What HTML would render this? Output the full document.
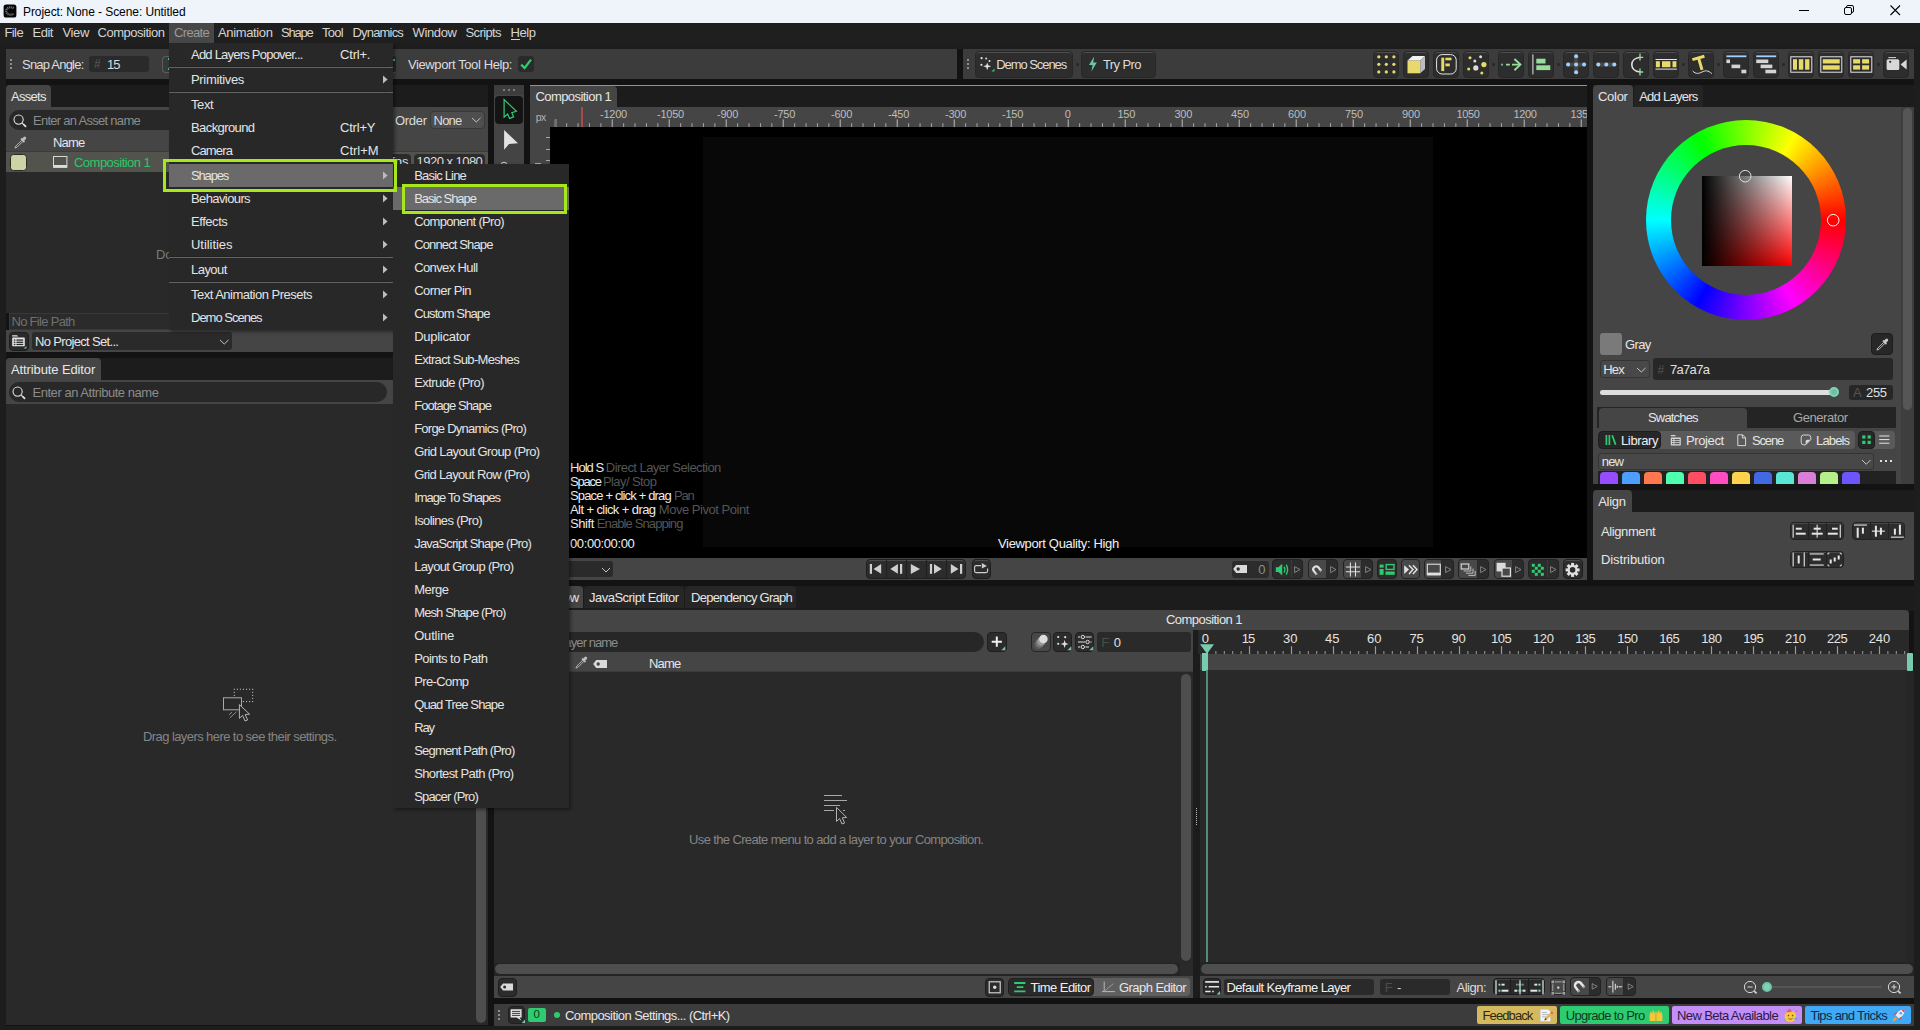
<!DOCTYPE html>
<html lang="en"><head><meta charset="utf-8"><title>Project: None - Scene: Untitled</title><style>
html,body{margin:0;padding:0;}
body{width:1920px;height:1030px;overflow:hidden;background:#1d1d1d;position:relative;font-family:"Liberation Sans",sans-serif;font-size:12.5px;}
#root{position:absolute;left:0;top:0;width:1920px;height:1030px;overflow:hidden;}
#root div,#root span.t,#root svg{position:absolute;box-sizing:border-box;}
span.t{white-space:pre;}
</style></head><body><div id="root">
<div style="left:0px;top:0px;width:1920px;height:23px;background:#eff3fa;"></div>
<svg style="left:3px;top:4px;" width="14" height="14" viewBox="0 0 14 14"><rect x="0.6" y="0.4" width="12.8" height="13.1" rx="2.6" fill="#050505"/><path d="M10.6 4.4 A4.3 3.7 0 1 0 10.6 9.6" fill="none" stroke="#6c6c6c" stroke-width="2.2" stroke-dasharray="1.2 0.6"/></svg>
<span class="t" style="left:23.00px;top:6.34px;font-size:12px;line-height:12px;letter-spacing:-0.072px;color:#000;">Project: None - Scene: Untitled</span>
<svg style="left:1794px;top:0px;" width="120" height="23" viewBox="0 0 120 23"><path d="M5 10.5 H15" stroke="#000" stroke-width="1"/><rect x="50.5" y="7.5" width="7" height="7" rx="1.5" fill="none" stroke="#000" stroke-width="1"/><path d="M52.5 7.5 V6.8 Q52.5 5.5 54 5.5 H58 Q59.5 5.5 59.5 7 V11 Q59.5 12.5 58 12.5 H57.5" fill="none" stroke="#000" stroke-width="1"/><path d="M96.5 5.5 L106 15 M106 5.5 L96.5 15" stroke="#000" stroke-width="1.1"/></svg>
<div style="left:0px;top:23px;width:1920px;height:20px;background:#1f1f1f;"></div>
<div style="left:169px;top:23px;width:45px;height:20px;background:#474747;"></div>
<span class="t" style="left:4.50px;top:26.40px;font-size:13px;line-height:13px;letter-spacing:-0.612px;color:#d4d4d4;">File</span>
<span class="t" style="left:32.50px;top:26.40px;font-size:13px;line-height:13px;letter-spacing:-0.475px;color:#d4d4d4;">Edit</span>
<span class="t" style="left:62.50px;top:26.40px;font-size:13px;line-height:13px;letter-spacing:-0.360px;color:#d4d4d4;">View</span>
<span class="t" style="left:97.50px;top:26.40px;font-size:13px;line-height:13px;letter-spacing:-0.477px;color:#d4d4d4;">Composition</span>
<span class="t" style="left:174.00px;top:26.40px;font-size:13px;line-height:13px;letter-spacing:-0.669px;color:#9a9a9a;">Create</span>
<span class="t" style="left:218.00px;top:26.40px;font-size:13px;line-height:13px;letter-spacing:-0.367px;color:#d4d4d4;">Animation</span>
<span class="t" style="left:281.00px;top:26.40px;font-size:13px;line-height:13px;letter-spacing:-1.200px;color:#d4d4d4;">Shape</span>
<span class="t" style="left:322.00px;top:26.40px;font-size:13px;line-height:13px;letter-spacing:-0.712px;color:#d4d4d4;">Tool</span>
<span class="t" style="left:352.50px;top:26.40px;font-size:13px;line-height:13px;letter-spacing:-0.820px;color:#d4d4d4;">Dynamics</span>
<span class="t" style="left:412.50px;top:26.40px;font-size:13px;line-height:13px;letter-spacing:-0.373px;color:#d4d4d4;">Window</span>
<span class="t" style="left:465.50px;top:26.40px;font-size:13px;line-height:13px;letter-spacing:-0.604px;color:#d4d4d4;">Scripts</span>
<span class="t" style="left:510.50px;top:26.40px;font-size:13px;line-height:13px;letter-spacing:-0.434px;color:#d4d4d4;">Help</span>
<div style="left:511px;top:39px;width:9px;height:1px;background:#d4d4d4;"></div>
<div style="left:6px;top:79px;width:1908px;height:946.5px;background:#131313;"></div>
<div style="left:6px;top:49px;width:951px;height:30px;background:#3c3c3c;"></div>
<div style="left:10px;top:59px;width:2px;height:2px;background:#8e8e8e;"></div>
<div style="left:10px;top:63px;width:2px;height:2px;background:#8e8e8e;"></div>
<div style="left:10px;top:67px;width:2px;height:2px;background:#8e8e8e;"></div>
<span class="t" style="left:22.00px;top:57.70px;font-size:13px;line-height:13px;letter-spacing:-0.783px;color:#dcdcdc;">Snap Angle:</span>
<div style="left:89px;top:56px;width:60px;height:16px;background:#2a2a2a;border-radius:3px;"></div>
<span class="t" style="left:94.00px;top:58.34px;font-size:12px;line-height:12px;letter-spacing:-0.200px;color:#5a5a5a;">#</span>
<span class="t" style="left:107.00px;top:57.60px;font-size:13px;line-height:13px;letter-spacing:-0.979px;color:#dcdcdc;">15</span>
<div style="left:161.5px;top:55.5px;width:234.5px;height:17px;background:#393939;border-radius:4px;border:1px solid #5e5e5e;border-right-color:#262626;"></div>
<div style="left:167.6px;top:58px;width:1.6px;height:1.6px;background:#2ecc71;"></div>
<div style="left:167.6px;top:68.4px;width:1.6px;height:1.6px;background:#2ecc71;"></div>
<div style="left:390px;top:56px;width:6px;height:16px;background:#262626;border-radius:0 3px 3px 0;"></div>
<div style="left:393.2px;top:59.4px;width:1.6px;height:1.6px;background:#2ecc71;"></div>
<span class="t" style="left:408.00px;top:57.70px;font-size:13px;line-height:13px;letter-spacing:-0.396px;color:#dcdcdc;">Viewport Tool Help:</span>
<div style="left:518px;top:56px;width:16px;height:16px;background:#2a2a2a;border-radius:3px;"></div>
<svg style="left:518px;top:56px;" width="16" height="16" viewBox="0 0 16 16"><path d="M3.2 8.6 L6.6 12 L13 3.6" fill="none" stroke="#2ecc71" stroke-width="2.2" stroke-linecap="butt" stroke-linejoin="miter"/></svg>
<div style="left:957px;top:49px;width:6px;height:30px;background:#131313;"></div>
<div style="left:963px;top:49px;width:951px;height:30px;background:#3c3c3c;"></div>
<div style="left:967px;top:59px;width:2px;height:2px;background:#8e8e8e;"></div>
<div style="left:967px;top:63px;width:2px;height:2px;background:#8e8e8e;"></div>
<div style="left:967px;top:67px;width:2px;height:2px;background:#8e8e8e;"></div>
<div style="left:974.5px;top:51px;width:98.5px;height:26.5px;background:#2d2d2d;border:1px solid #272727;border-radius:4px;box-shadow:inset 0 1px 0 #4e4e4e;"></div>
<div style="left:1081px;top:51px;width:74.5px;height:26.5px;background:#2d2d2d;border:1px solid #272727;border-radius:4px;box-shadow:inset 0 1px 0 #4e4e4e;"></div>
<div style="left:1076px;top:63px;width:2.6px;height:2.6px;background:#292929;border-radius:50%;"></div>
<svg style="left:979px;top:56px;" width="17" height="17" viewBox="0 0 17 17"><g fill="#e0e0e0"><circle cx="2.6" cy="2.2" r="1.1"/><circle cx="7.2" cy="2.6" r="1.0"/><circle cx="2.4" cy="8.8" r="1.1"/><circle cx="10.5" cy="5" r="1.0"/><path d="M8.2 6.4 L9.2 9.2 L12.2 10.2 L9.2 11.2 L8.2 14.2 L7.2 11.2 L4.2 10.2 L7.2 9.2 Z"/></g><path d="M15.5 12.5 V15.5 H12.5 Z" fill="#2ecc71"/></svg>
<span class="t" style="left:996.20px;top:57.70px;font-size:13px;line-height:13px;letter-spacing:-1.059px;color:#dcdcdc;">Demo Scenes</span>
<svg style="left:1088px;top:56px;" width="10" height="16" viewBox="0 0 10 16"><path d="M6.2 0.5 L1 9 H4.6 L3.4 15.5 L8.8 6.6 H5.2 Z" fill="#6fc5a7"/></svg>
<span class="t" style="left:1103.00px;top:57.70px;font-size:13px;line-height:13px;letter-spacing:-0.590px;color:#dcdcdc;">Try Pro</span>
<div style="left:1372.5px;top:51px;width:26.5px;height:26.5px;background:#2d2d2d;border:1px solid #272727;border-radius:4px;box-shadow:inset 0 1px 0 #4e4e4e;"></div>
<svg style="left:1372.5px;top:51px;" width="27" height="27" viewBox="0 0 27 27"><circle cx="5.8" cy="5.8" r="1.6" fill="#e8d96b"/><circle cx="5.8" cy="13.3" r="1.6" fill="#e8d96b"/><circle cx="5.8" cy="20.9" r="1.6" fill="#e8d96b"/><circle cx="13.3" cy="5.8" r="1.6" fill="#e8d96b"/><circle cx="13.3" cy="13.3" r="1.6" fill="#e8d96b"/><circle cx="13.3" cy="20.9" r="1.6" fill="#e8d96b"/><circle cx="20.9" cy="5.8" r="1.6" fill="#e8d96b"/><circle cx="20.9" cy="13.3" r="1.6" fill="#e8d96b"/><circle cx="20.9" cy="20.9" r="1.6" fill="#e8d96b"/></svg>
<div style="left:1402.5px;top:51px;width:26.5px;height:26.5px;background:#2d2d2d;border:1px solid #272727;border-radius:4px;box-shadow:inset 0 1px 0 #4e4e4e;"></div>
<svg style="left:1402.5px;top:51px;" width="27" height="27" viewBox="0 0 27 27"><rect x="4.5" y="9.5" width="12.7" height="12.8" fill="#e8d96b"/><path d="M4.5 9.5 L9.5 5 H22 L17.2 9.5 Z" fill="#f2f2f2"/><path d="M17.2 9.5 L22 5 V18 L17.2 22.3 Z" fill="#bdbdbd"/></svg>
<div style="left:1432.5px;top:51px;width:26.5px;height:26.5px;background:#2d2d2d;border:1px solid #272727;border-radius:4px;box-shadow:inset 0 1px 0 #4e4e4e;"></div>
<svg style="left:1432.5px;top:51px;" width="27" height="27" viewBox="0 0 27 27"><rect x="3.6" y="3.6" width="19.6" height="19.4" rx="5.5" fill="none" stroke="#e6e6e6" stroke-width="1"/><rect x="8.3" y="6.7" width="2.9" height="13.4" fill="#e8d96b"/><rect x="12.4" y="6.7" width="6.1" height="2.6" fill="#e8d96b"/><rect x="12.4" y="12.5" width="4.4" height="2.8" fill="#e8d96b"/></svg>
<div style="left:1462.5px;top:51px;width:26.5px;height:26.5px;background:#2d2d2d;border:1px solid #272727;border-radius:4px;box-shadow:inset 0 1px 0 #4e4e4e;"></div>
<svg style="left:1462.5px;top:51px;" width="27" height="27" viewBox="0 0 27 27"><circle cx="7" cy="6.7" r="1.5" fill="#e8d96b"/><circle cx="17.6" cy="5.8" r="1.5" fill="#dcdcdc"/><circle cx="11.8" cy="9.9" r="1.5" fill="#dcdcdc"/><circle cx="20.9" cy="13.6" r="2.6" fill="#e8d96b"/><circle cx="12.8" cy="16.9" r="2.6" fill="#dcdcdc"/><circle cx="5.7" cy="17.9" r="1.5" fill="#e8d96b"/><circle cx="18.8" cy="21.9" r="1.5" fill="#e8d96b"/></svg>
<div style="left:1497.5px;top:51px;width:26.5px;height:26.5px;background:#2d2d2d;border:1px solid #272727;border-radius:4px;box-shadow:inset 0 1px 0 #4e4e4e;"></div>
<svg style="left:1497.5px;top:51px;" width="27" height="27" viewBox="0 0 27 27"><g stroke="#97dd9c" stroke-width="1.8" fill="none"><path d="M3.2 13.6 H4.8 M8 13.6 H11.8 M14 13.6 H22"/><path d="M16.4 8 L22.4 13.6 L16.4 19.2" stroke-width="1.9"/></g></svg>
<div style="left:1527.5px;top:51px;width:26.5px;height:26.5px;background:#2d2d2d;border:1px solid #272727;border-radius:4px;box-shadow:inset 0 1px 0 #4e4e4e;"></div>
<svg style="left:1527.5px;top:51px;" width="27" height="27" viewBox="0 0 27 27"><rect x="4.4" y="3.4" width="1" height="20" fill="#e6e6e6"/><rect x="8.3" y="7.7" width="9.2" height="4.8" fill="#97dd9c"/><rect x="8.3" y="14.3" width="14" height="4.8" fill="#97dd9c"/></svg>
<div style="left:1562.5px;top:51px;width:26.5px;height:26.5px;background:#2d2d2d;border:1px solid #272727;border-radius:4px;box-shadow:inset 0 1px 0 #4e4e4e;"></div>
<svg style="left:1562.5px;top:51px;" width="27" height="27" viewBox="0 0 27 27"><path d="M13.1 5.3 V21.3 M5.1 13.6 H21.1" stroke="#484848" stroke-width="4.4" stroke-linecap="round"/><circle cx="13.1" cy="13.6" r="2" fill="#9fd0ff"/><circle cx="5.1" cy="13.6" r="2" fill="#9fd0ff"/><circle cx="21.1" cy="13.6" r="2" fill="#9fd0ff"/><circle cx="13.1" cy="5.3" r="2" fill="#9fd0ff"/><circle cx="13.1" cy="21.3" r="2" fill="#9fd0ff"/></svg>
<div style="left:1592.5px;top:51px;width:26.5px;height:26.5px;background:#2d2d2d;border:1px solid #272727;border-radius:4px;box-shadow:inset 0 1px 0 #4e4e4e;"></div>
<svg style="left:1592.5px;top:51px;" width="27" height="27" viewBox="0 0 27 27"><path d="M5.3 13.6 H21.3" stroke="#484848" stroke-width="4.4" stroke-linecap="round"/><circle cx="5.3" cy="13.6" r="2" fill="#9fd0ff"/><circle cx="13.3" cy="13.6" r="2" fill="#9fd0ff"/><circle cx="21.3" cy="13.6" r="2" fill="#9fd0ff"/></svg>
<div style="left:1622.5px;top:51px;width:26.5px;height:26.5px;background:#2d2d2d;border:1px solid #272727;border-radius:4px;box-shadow:inset 0 1px 0 #4e4e4e;"></div>
<svg style="left:1622.5px;top:51px;" width="27" height="27" viewBox="0 0 27 27"><path d="M17.2 6.3 C6 7.5 6 19.8 17.2 21" fill="none" stroke="#e0e0e0" stroke-width="1.6"/><path d="M17 2.6 V9.6 M17 6.3 H20.2 M17 17.6 V24.4 M17 21 H20.2" stroke="#97dd9c" stroke-width="1.3" fill="none"/></svg>
<div style="left:1652.5px;top:51px;width:26.5px;height:26.5px;background:#2d2d2d;border:1px solid #272727;border-radius:4px;box-shadow:inset 0 1px 0 #4e4e4e;"></div>
<svg style="left:1652.5px;top:51px;" width="27" height="27" viewBox="0 0 27 27"><rect x="2.5" y="8" width="21.4" height="1" fill="#e6e6e6"/><rect x="2.5" y="17.6" width="21.4" height="1" fill="#e6e6e6"/><rect x="2.9" y="10.2" width="4" height="6" fill="#e8d96b"/><rect x="9" y="10.2" width="8.4" height="6" fill="#e8d96b"/><rect x="19.5" y="10.2" width="3.9" height="6" fill="#e8d96b"/></svg>
<div style="left:1687.5px;top:51px;width:26.5px;height:26.5px;background:#2d2d2d;border:1px solid #272727;border-radius:4px;box-shadow:inset 0 1px 0 #4e4e4e;"></div>
<svg style="left:1687.5px;top:51px;" width="27" height="27" viewBox="0 0 27 27"><path d="M4.4 8.6 L16.4 5.2" stroke="#e8d96b" stroke-width="3" fill="none"/><path d="M10.6 7.2 L14 18.8" stroke="#e8d96b" stroke-width="3" fill="none"/><path d="M4.7 20 C8 23.5 11 22.5 14 21 S20 19 23.9 22.7" stroke="#e0e0e0" stroke-width="1" fill="none"/></svg>
<div style="left:1722.5px;top:51px;width:26.5px;height:26.5px;background:#2d2d2d;border:1px solid #272727;border-radius:4px;box-shadow:inset 0 1px 0 #4e4e4e;"></div>
<svg style="left:1722.5px;top:51px;" width="27" height="27" viewBox="0 0 27 27"><rect x="3.4" y="4.4" width="20" height="1.8" fill="#9fd0ff"/><rect x="3.4" y="8.5" width="3.6" height="3.6" fill="#d4d4d4"/><rect x="8.5" y="13.6" width="8.7" height="3.6" fill="#d4d4d4"/><rect x="18.4" y="18.7" width="4.9" height="3.6" fill="#d4d4d4"/></svg>
<div style="left:1752.5px;top:51px;width:26.5px;height:26.5px;background:#2d2d2d;border:1px solid #272727;border-radius:4px;box-shadow:inset 0 1px 0 #4e4e4e;"></div>
<svg style="left:1752.5px;top:51px;" width="27" height="27" viewBox="0 0 27 27"><rect x="3.2" y="4.4" width="20" height="1.8" fill="#9fd0ff"/><rect x="3.2" y="8.5" width="12.1" height="3.6" fill="#d4d4d4"/><rect x="7.6" y="13.6" width="11.7" height="3.6" fill="#d4d4d4"/><rect x="12.4" y="18.7" width="10.8" height="3.6" fill="#d4d4d4"/></svg>
<div style="left:1787.5px;top:51px;width:26.5px;height:26.5px;background:#2d2d2d;border:1px solid #272727;border-radius:4px;box-shadow:inset 0 1px 0 #4e4e4e;"></div>
<svg style="left:1787.5px;top:51px;" width="27" height="27" viewBox="0 0 27 27"><rect x="2.8" y="5.8" width="21" height="15.4" fill="none" stroke="#e6e6e6" stroke-width="1"/><rect x="5" y="8.2" width="4" height="10.5" fill="#e8d96b"/><rect x="10.8" y="8.2" width="4.5" height="10.5" fill="#e8d96b"/><rect x="17.1" y="8.2" width="4.299999999999997" height="10.5" fill="#e8d96b"/></svg>
<div style="left:1817.5px;top:51px;width:26.5px;height:26.5px;background:#2d2d2d;border:1px solid #272727;border-radius:4px;box-shadow:inset 0 1px 0 #4e4e4e;"></div>
<svg style="left:1817.5px;top:51px;" width="27" height="27" viewBox="0 0 27 27"><rect x="2.8" y="5.8" width="21" height="15.4" fill="none" stroke="#e6e6e6" stroke-width="1"/><rect x="4.8" y="8.2" width="16.9" height="4.3" fill="#e8d96b"/><rect x="4.8" y="14.3" width="16.9" height="4.4" fill="#e8d96b"/></svg>
<div style="left:1847.5px;top:51px;width:26.5px;height:26.5px;background:#2d2d2d;border:1px solid #272727;border-radius:4px;box-shadow:inset 0 1px 0 #4e4e4e;"></div>
<svg style="left:1847.5px;top:51px;" width="27" height="27" viewBox="0 0 27 27"><rect x="2.8" y="5.8" width="21" height="15.4" fill="none" stroke="#e6e6e6" stroke-width="1"/><rect x="5.1" y="8.2" width="7" height="4.3" fill="#e8d96b"/><rect x="5.1" y="14.3" width="7" height="4.3" fill="#e8d96b"/><rect x="14.1" y="8.2" width="7" height="4.3" fill="#e8d96b"/><rect x="14.1" y="14.3" width="7" height="4.3" fill="#e8d96b"/></svg>
<div style="left:1882.5px;top:51px;width:26.5px;height:26.5px;background:#2d2d2d;border:1px solid #272727;border-radius:4px;box-shadow:inset 0 1px 0 #4e4e4e;"></div>
<svg style="left:1882.5px;top:51px;" width="27" height="27" viewBox="0 0 27 27"><rect x="3.6" y="8.2" width="12.7" height="10.8" rx="1.5" fill="#d8d8d8"/><path d="M17.6 13.6 L23.6 8.4 V18.6 Z" fill="#d8d8d8"/><rect x="5.4" y="6.1" width="7.6" height="1" fill="#d8d8d8"/><circle cx="7.2" cy="10.8" r="1.1" fill="#2d2d2d"/></svg>
<div style="left:1492.3px;top:63px;width:2.6px;height:2.6px;background:#292929;border-radius:50%;"></div>
<div style="left:1557.3px;top:63px;width:2.6px;height:2.6px;background:#292929;border-radius:50%;"></div>
<div style="left:1682.3px;top:63px;width:2.6px;height:2.6px;background:#292929;border-radius:50%;"></div>
<div style="left:1717.3px;top:63px;width:2.6px;height:2.6px;background:#292929;border-radius:50%;"></div>
<div style="left:1782.3px;top:63px;width:2.6px;height:2.6px;background:#292929;border-radius:50%;"></div>
<div style="left:1877.3px;top:63px;width:2.6px;height:2.6px;background:#292929;border-radius:50%;"></div>
<div style="left:6px;top:85px;width:482px;height:22px;background:#1c1c1c;"></div>
<div style="left:6px;top:85px;width:45px;height:22px;background:#454545;border-radius:4px 4px 0 0;"></div>
<span class="t" style="left:11.00px;top:89.80px;font-size:13px;line-height:13px;letter-spacing:-0.702px;color:#e6e6e6;">Assets</span>
<div style="left:6px;top:107px;width:482px;height:46px;background:#454545;"></div>
<div style="left:9px;top:110px;width:382px;height:20px;background:#282828;border-radius:10px;"></div>
<svg style="left:13px;top:113.5px;" width="14" height="14" viewBox="0 0 14 14"><circle cx="5.6" cy="5.6" r="4.6" fill="none" stroke="#e0e0e0" stroke-width="1.1"/><path d="M9 9 L12.4 12.2" stroke="#e0e0e0" stroke-width="1.1"/><path d="M11 10.8 L12.6 12.3" stroke="#e0e0e0" stroke-width="1.7" stroke-linecap="round"/></svg>
<span class="t" style="left:33.00px;top:113.80px;font-size:13px;line-height:13px;letter-spacing:-0.720px;color:#8c8c8c;">Enter an Asset name</span>
<span class="t" style="left:395.00px;top:113.80px;font-size:13px;line-height:13px;letter-spacing:-0.305px;color:#dcdcdc;">Order</span>
<div style="left:430.3px;top:111px;width:54.4px;height:17.5px;background:#4e4e4e;border:1px solid #383838;border-radius:4px;"></div>
<span class="t" style="left:433.60px;top:113.80px;font-size:13px;line-height:13px;letter-spacing:-0.844px;color:#dcdcdc;">None</span>
<svg style="left:470.5px;top:117px;" width="10.5" height="6.5" viewBox="0 0 10.5 6.5"><path d="M1 1 L5.25 5.0 L9.5 1" fill="none" stroke="#c4c4c4" stroke-width="1"/></svg>
<div style="left:6px;top:151px;width:482px;height:1px;background:#3b3b3b;"></div>
<svg style="left:14px;top:136px;" width="13" height="13" viewBox="0 0 13 13"><path d="M0.9 12.1 L1.9 10 L7.4 4.5 L8.6 5.7 L3.1 11.2 Z" fill="none" stroke="#bdbdbd" stroke-width="0.9"/><path d="M6.4 3.2 L9.9 6.7 L11 5.6 L10.2 4.8 L11.9 3.1 Q12.7 1.8 11.7 0.9 Q10.8 0.1 9.7 0.9 L8.1 2.6 L7.4 1.9 Z" fill="#bdbdbd"/></svg>
<span class="t" style="left:53.00px;top:136.40px;font-size:13px;line-height:13px;letter-spacing:-0.794px;color:#e6e6e6;">Name</span>
<div style="left:6px;top:152px;width:482px;height:20px;background:#52534c;"></div>
<div style="left:9.5px;top:153.5px;width:17px;height:17px;background:#cdd3a3;border:1px solid #2a2a26;border-radius:3.5px;"></div>
<svg style="left:53px;top:156px;" width="15" height="12" viewBox="0 0 15 12"><rect x="0.5" y="0.5" width="13.4" height="10.8" fill="none" stroke="#d6d6d6" stroke-width="1"/><rect x="0.5" y="9" width="13.4" height="2.6" fill="#dcdcdc"/></svg>
<span class="t" style="left:74.00px;top:155.90px;font-size:13px;line-height:13px;letter-spacing:-0.522px;color:#2bc86b;">Composition 1</span>
<div style="left:384px;top:154px;width:26.5px;height:17px;background:#2b2b2b;border-radius:4px;"></div>
<span class="t" style="left:391.20px;top:155.40px;font-size:13px;line-height:13px;letter-spacing:0.020px;color:#dcdcdc;">fps</span>
<div style="left:414px;top:154px;width:71px;height:17px;background:#2b2b2b;border-radius:4px;"></div>
<span class="t" style="left:416.60px;top:155.40px;font-size:13px;line-height:13px;letter-spacing:-0.532px;color:#dcdcdc;">1920 x 1080</span>
<div style="left:6px;top:172px;width:482px;height:141px;background:#292929;"></div>
<span class="t" style="left:156.00px;top:248.30px;font-size:13px;line-height:13px;letter-spacing:-0.200px;color:#7a7a7a;">Double-click to import Assets</span>
<div style="left:8.5px;top:312.5px;width:479px;height:17px;background:#2b2b2b;border:1px solid #383838;"></div>
<span class="t" style="left:11.50px;top:314.70px;font-size:13px;line-height:13px;letter-spacing:-0.702px;color:#707070;">No File Path</span>
<div style="left:6px;top:329.5px;width:482px;height:22.5px;background:#454545;"></div>
<div style="left:9px;top:331.5px;width:19.5px;height:19px;background:#2a2a2a;border:1px solid #1e1e1e;border-radius:4px;"></div>
<svg style="left:11px;top:333px;" width="16" height="16" viewBox="0 0 16 16"><path d="M1.2 3.2 V2.2 H6 L7.2 3.4 H1.2" fill="#e6e6e6"/><rect x="1.2" y="4.6" width="12.6" height="8.6" rx="0.8" fill="#e6e6e6"/><g fill="#2a2a2a"><rect x="2.8" y="6.4" width="1.6" height="1.3"/><rect x="5.4" y="6.4" width="6.8" height="1.3"/><rect x="2.8" y="8.6" width="1.6" height="1.3"/><rect x="5.4" y="8.6" width="6.8" height="1.3"/><rect x="2.8" y="10.8" width="1.6" height="1.3"/><rect x="5.4" y="10.8" width="6.8" height="1.3"/></g><path d="M15.4 13 V15.6 H12.8 Z" fill="#6fc5a7"/></svg>
<div style="left:32px;top:332px;width:200px;height:18px;background:#2a2a2a;border-radius:3px;"></div>
<span class="t" style="left:35.00px;top:334.70px;font-size:13px;line-height:13px;letter-spacing:-0.667px;color:#e6e6e6;">No Project Set...</span>
<svg style="left:218.5px;top:338.5px;" width="10.5" height="6.5" viewBox="0 0 10.5 6.5"><path d="M1 1 L5.25 5.0 L9.5 1" fill="none" stroke="#c4c4c4" stroke-width="1"/></svg>
<div style="left:6px;top:358px;width:482px;height:22px;background:#1c1c1c;"></div>
<div style="left:6px;top:358px;width:95px;height:22px;background:#454545;border-radius:4px 4px 0 0;"></div>
<span class="t" style="left:11.00px;top:363.00px;font-size:13px;line-height:13px;letter-spacing:-0.111px;color:#e6e6e6;">Attribute Editor</span>
<div style="left:6px;top:380px;width:482px;height:24px;background:#454545;"></div>
<div style="left:8.5px;top:382px;width:378px;height:19.5px;background:#282828;border-radius:10px;"></div>
<svg style="left:12px;top:385.5px;" width="14" height="14" viewBox="0 0 14 14"><circle cx="5.6" cy="5.6" r="4.6" fill="none" stroke="#e0e0e0" stroke-width="1.1"/><path d="M9 9 L12.4 12.2" stroke="#e0e0e0" stroke-width="1.1"/><path d="M11 10.8 L12.6 12.3" stroke="#e0e0e0" stroke-width="1.7" stroke-linecap="round"/></svg>
<span class="t" style="left:32.50px;top:386.10px;font-size:13px;line-height:13px;letter-spacing:-0.464px;color:#8c8c8c;">Enter an Attribute name</span>
<div style="left:6px;top:404px;width:482px;height:621px;background:#292929;"></div>
<div style="left:476px;top:406px;width:10px;height:616.5px;background:#4e4e4e;border-radius:5px;"></div>
<svg style="left:220px;top:686px;" width="38" height="38" viewBox="0 0 38 38"><rect x="13.75" y="2.75" width="1.1" height="1.1" fill="#b8b8b8"/><rect x="16.81" y="2.75" width="1.1" height="1.1" fill="#b8b8b8"/><rect x="19.87" y="2.75" width="1.1" height="1.1" fill="#b8b8b8"/><rect x="22.93" y="2.75" width="1.1" height="1.1" fill="#b8b8b8"/><rect x="25.99" y="2.75" width="1.1" height="1.1" fill="#b8b8b8"/><rect x="29.05" y="2.75" width="1.1" height="1.1" fill="#b8b8b8"/><rect x="32.11" y="2.75" width="1.1" height="1.1" fill="#b8b8b8"/><rect x="32.11" y="5.81" width="1.1" height="1.1" fill="#b8b8b8"/><rect x="32.11" y="8.87" width="1.1" height="1.1" fill="#b8b8b8"/><rect x="32.11" y="11.93" width="1.1" height="1.1" fill="#b8b8b8"/><rect x="32.11" y="14.99" width="1.1" height="1.1" fill="#b8b8b8"/><rect x="13.75" y="5.81" width="1.1" height="1.1" fill="#b8b8b8"/><rect x="13.75" y="8.87" width="1.1" height="1.1" fill="#b8b8b8"/><rect x="22.93" y="14.99" width="1.1" height="1.1" fill="#b8b8b8"/><rect x="25.99" y="14.99" width="1.1" height="1.1" fill="#b8b8b8"/><rect x="29.05" y="14.99" width="1.1" height="1.1" fill="#b8b8b8"/><g fill="none" stroke="#a8a8a8" stroke-width="1"><rect x="3.5" y="11.8" width="18" height="12"/><path d="M9 29 L12 26 M9.8 32 L16.4 25.8" stroke="#8c8c8c"/></g><path d="M19.4 18.6 V32.4 L22.6 29.4 L25 35 L27.6 34 L25.2 28.6 L29.6 28.2 Z" fill="#292929" stroke="#b4b4b4" stroke-width="1"/></svg>
<span class="t" style="left:143.00px;top:729.60px;font-size:13px;line-height:13px;letter-spacing:-0.580px;color:#858585;">Drag layers here to see their settings.</span>
<div style="left:494px;top:85px;width:30px;height:495px;background:#444;"></div>
<div style="left:494px;top:85px;width:30px;height:10px;background:#3d3d3d;"></div>
<div style="left:503px;top:89.2px;width:1.8px;height:1.8px;background:#7c7c7c;"></div>
<div style="left:508.2px;top:89.2px;width:1.8px;height:1.8px;background:#7c7c7c;"></div>
<div style="left:513.3px;top:89.2px;width:1.8px;height:1.8px;background:#7c7c7c;"></div>
<div style="left:495px;top:96px;width:28px;height:28px;background:#141414;border-radius:4px;"></div>
<svg style="left:495px;top:96px;" width="28" height="28" viewBox="0 0 28 28"><path d="M9.1 3.6 V21.2 L12.6 18 L14.6 22.4 L18.6 20.8 L16.8 16.6 L21.4 15.2 Z" fill="none" stroke="#2ecc71" stroke-width="1.2" stroke-linejoin="miter"/></svg>
<svg style="left:495px;top:126px;" width="28" height="28" viewBox="0 0 28 28"><path d="M9.1 4.1 V23.7 L14 18 L23 17.3 Z" fill="#e2e2e2"/></svg>
<svg style="left:495px;top:156px;" width="28" height="10" viewBox="0 0 28 10"><path d="M6 7.4 L9 6.2 L12 7.4" fill="none" stroke="#d0d0d0" stroke-width="1"/></svg>
<div style="left:530px;top:85px;width:1057px;height:22px;background:#1c1c1c;"></div>
<div style="left:530px;top:85px;width:1057px;height:1px;background:#2ecc71;"></div>
<div style="left:530px;top:86px;width:87px;height:21px;background:#454545;border-radius:0 4px 0 0;"></div>
<span class="t" style="left:535.40px;top:89.80px;font-size:13px;line-height:13px;letter-spacing:-0.553px;color:#e6e6e6;">Composition 1</span>
<div style="left:530px;top:107px;width:1057px;height:20px;background:#454545;"></div>
<div style="left:530px;top:127px;width:20px;height:430px;background:#454545;"></div>
<span class="t" style="left:535.70px;top:112.31px;font-size:10.5px;line-height:10.5px;letter-spacing:-0.594px;color:#b4b4b4;">px</span>
<svg style="left:530px;top:107px;" width="1057" height="20" viewBox="0 0 1057 20"><rect x="24.65" y="12.4" width="1.2" height="7.6" fill="#a8a8a8"/><rect x="36.15" y="16.2" width="1" height="3.8" fill="#a8a8a8"/><rect x="47.55" y="16.2" width="1" height="3.8" fill="#a8a8a8"/><rect x="58.95" y="16.2" width="1" height="3.8" fill="#a8a8a8"/><rect x="70.35" y="16.2" width="1" height="3.8" fill="#a8a8a8"/><rect x="81.65" y="12.4" width="1.2" height="7.6" fill="#a8a8a8"/><rect x="93.15" y="16.2" width="1" height="3.8" fill="#a8a8a8"/><rect x="104.55" y="16.2" width="1" height="3.8" fill="#a8a8a8"/><rect x="115.95" y="16.2" width="1" height="3.8" fill="#a8a8a8"/><rect x="127.35" y="16.2" width="1" height="3.8" fill="#a8a8a8"/><rect x="138.65" y="12.4" width="1.2" height="7.6" fill="#a8a8a8"/><rect x="150.15" y="16.2" width="1" height="3.8" fill="#a8a8a8"/><rect x="161.55" y="16.2" width="1" height="3.8" fill="#a8a8a8"/><rect x="172.95" y="16.2" width="1" height="3.8" fill="#a8a8a8"/><rect x="184.35" y="16.2" width="1" height="3.8" fill="#a8a8a8"/><rect x="195.65" y="12.4" width="1.2" height="7.6" fill="#a8a8a8"/><rect x="207.15" y="16.2" width="1" height="3.8" fill="#a8a8a8"/><rect x="218.55" y="16.2" width="1" height="3.8" fill="#a8a8a8"/><rect x="229.95" y="16.2" width="1" height="3.8" fill="#a8a8a8"/><rect x="241.35" y="16.2" width="1" height="3.8" fill="#a8a8a8"/><rect x="252.65" y="12.4" width="1.2" height="7.6" fill="#a8a8a8"/><rect x="264.15" y="16.2" width="1" height="3.8" fill="#a8a8a8"/><rect x="275.55" y="16.2" width="1" height="3.8" fill="#a8a8a8"/><rect x="286.95" y="16.2" width="1" height="3.8" fill="#a8a8a8"/><rect x="298.35" y="16.2" width="1" height="3.8" fill="#a8a8a8"/><rect x="309.65" y="12.4" width="1.2" height="7.6" fill="#a8a8a8"/><rect x="321.15" y="16.2" width="1" height="3.8" fill="#a8a8a8"/><rect x="332.55" y="16.2" width="1" height="3.8" fill="#a8a8a8"/><rect x="343.95" y="16.2" width="1" height="3.8" fill="#a8a8a8"/><rect x="355.35" y="16.2" width="1" height="3.8" fill="#a8a8a8"/><rect x="366.65" y="12.4" width="1.2" height="7.6" fill="#a8a8a8"/><rect x="378.15" y="16.2" width="1" height="3.8" fill="#a8a8a8"/><rect x="389.55" y="16.2" width="1" height="3.8" fill="#a8a8a8"/><rect x="400.95" y="16.2" width="1" height="3.8" fill="#a8a8a8"/><rect x="412.35" y="16.2" width="1" height="3.8" fill="#a8a8a8"/><rect x="423.65" y="12.4" width="1.2" height="7.6" fill="#a8a8a8"/><rect x="435.15" y="16.2" width="1" height="3.8" fill="#a8a8a8"/><rect x="446.55" y="16.2" width="1" height="3.8" fill="#a8a8a8"/><rect x="457.95" y="16.2" width="1" height="3.8" fill="#a8a8a8"/><rect x="469.35" y="16.2" width="1" height="3.8" fill="#a8a8a8"/><rect x="480.65" y="12.4" width="1.2" height="7.6" fill="#a8a8a8"/><rect x="492.15" y="16.2" width="1" height="3.8" fill="#a8a8a8"/><rect x="503.55" y="16.2" width="1" height="3.8" fill="#a8a8a8"/><rect x="514.95" y="16.2" width="1" height="3.8" fill="#a8a8a8"/><rect x="526.35" y="16.2" width="1" height="3.8" fill="#a8a8a8"/><rect x="537.65" y="12.4" width="1.2" height="7.6" fill="#a8a8a8"/><rect x="549.15" y="16.2" width="1" height="3.8" fill="#a8a8a8"/><rect x="560.55" y="16.2" width="1" height="3.8" fill="#a8a8a8"/><rect x="571.95" y="16.2" width="1" height="3.8" fill="#a8a8a8"/><rect x="583.35" y="16.2" width="1" height="3.8" fill="#a8a8a8"/><rect x="594.65" y="12.4" width="1.2" height="7.6" fill="#a8a8a8"/><rect x="606.15" y="16.2" width="1" height="3.8" fill="#a8a8a8"/><rect x="617.55" y="16.2" width="1" height="3.8" fill="#a8a8a8"/><rect x="628.95" y="16.2" width="1" height="3.8" fill="#a8a8a8"/><rect x="640.35" y="16.2" width="1" height="3.8" fill="#a8a8a8"/><rect x="651.65" y="12.4" width="1.2" height="7.6" fill="#a8a8a8"/><rect x="663.15" y="16.2" width="1" height="3.8" fill="#a8a8a8"/><rect x="674.55" y="16.2" width="1" height="3.8" fill="#a8a8a8"/><rect x="685.95" y="16.2" width="1" height="3.8" fill="#a8a8a8"/><rect x="697.35" y="16.2" width="1" height="3.8" fill="#a8a8a8"/><rect x="708.65" y="12.4" width="1.2" height="7.6" fill="#a8a8a8"/><rect x="720.15" y="16.2" width="1" height="3.8" fill="#a8a8a8"/><rect x="731.55" y="16.2" width="1" height="3.8" fill="#a8a8a8"/><rect x="742.95" y="16.2" width="1" height="3.8" fill="#a8a8a8"/><rect x="754.35" y="16.2" width="1" height="3.8" fill="#a8a8a8"/><rect x="765.65" y="12.4" width="1.2" height="7.6" fill="#a8a8a8"/><rect x="777.15" y="16.2" width="1" height="3.8" fill="#a8a8a8"/><rect x="788.55" y="16.2" width="1" height="3.8" fill="#a8a8a8"/><rect x="799.95" y="16.2" width="1" height="3.8" fill="#a8a8a8"/><rect x="811.35" y="16.2" width="1" height="3.8" fill="#a8a8a8"/><rect x="822.65" y="12.4" width="1.2" height="7.6" fill="#a8a8a8"/><rect x="834.15" y="16.2" width="1" height="3.8" fill="#a8a8a8"/><rect x="845.55" y="16.2" width="1" height="3.8" fill="#a8a8a8"/><rect x="856.95" y="16.2" width="1" height="3.8" fill="#a8a8a8"/><rect x="868.35" y="16.2" width="1" height="3.8" fill="#a8a8a8"/><rect x="879.65" y="12.4" width="1.2" height="7.6" fill="#a8a8a8"/><rect x="891.15" y="16.2" width="1" height="3.8" fill="#a8a8a8"/><rect x="902.55" y="16.2" width="1" height="3.8" fill="#a8a8a8"/><rect x="913.95" y="16.2" width="1" height="3.8" fill="#a8a8a8"/><rect x="925.35" y="16.2" width="1" height="3.8" fill="#a8a8a8"/><rect x="936.65" y="12.4" width="1.2" height="7.6" fill="#a8a8a8"/><rect x="948.15" y="16.2" width="1" height="3.8" fill="#a8a8a8"/><rect x="959.55" y="16.2" width="1" height="3.8" fill="#a8a8a8"/><rect x="970.95" y="16.2" width="1" height="3.8" fill="#a8a8a8"/><rect x="982.35" y="16.2" width="1" height="3.8" fill="#a8a8a8"/><rect x="993.65" y="12.4" width="1.2" height="7.6" fill="#a8a8a8"/><rect x="1005.15" y="16.2" width="1" height="3.8" fill="#a8a8a8"/><rect x="1016.55" y="16.2" width="1" height="3.8" fill="#a8a8a8"/><rect x="1027.95" y="16.2" width="1" height="3.8" fill="#a8a8a8"/><rect x="1039.35" y="16.2" width="1" height="3.8" fill="#a8a8a8"/><rect x="1050.65" y="12.4" width="1.2" height="7.6" fill="#a8a8a8"/></svg>
<div style="left:555.3px;top:119px;width:1.6px;height:8px;background:#707070;"></div>
<div style="left:581.3px;top:107px;width:2.2px;height:20px;background:#a84a4a;"></div>
<span class="t" style="left:600.00px;top:108.59px;font-size:11px;line-height:11px;letter-spacing:-0.226px;color:#bdbdbd;">-1200</span>
<span class="t" style="left:657.00px;top:108.59px;font-size:11px;line-height:11px;letter-spacing:-0.226px;color:#bdbdbd;">-1050</span>
<span class="t" style="left:717.00px;top:108.59px;font-size:11px;line-height:11px;letter-spacing:-0.253px;color:#bdbdbd;">-900</span>
<span class="t" style="left:774.00px;top:108.59px;font-size:11px;line-height:11px;letter-spacing:-0.253px;color:#bdbdbd;">-750</span>
<span class="t" style="left:831.00px;top:108.59px;font-size:11px;line-height:11px;letter-spacing:-0.253px;color:#bdbdbd;">-600</span>
<span class="t" style="left:888.00px;top:108.59px;font-size:11px;line-height:11px;letter-spacing:-0.253px;color:#bdbdbd;">-450</span>
<span class="t" style="left:945.00px;top:108.59px;font-size:11px;line-height:11px;letter-spacing:-0.253px;color:#bdbdbd;">-300</span>
<span class="t" style="left:1002.00px;top:108.59px;font-size:11px;line-height:11px;letter-spacing:-0.253px;color:#bdbdbd;">-150</span>
<span class="t" style="left:1064.70px;top:108.59px;font-size:11px;line-height:11px;letter-spacing:-0.200px;color:#bdbdbd;">0</span>
<span class="t" style="left:1117.50px;top:108.59px;font-size:11px;line-height:11px;letter-spacing:-0.284px;color:#bdbdbd;">150</span>
<span class="t" style="left:1174.50px;top:108.59px;font-size:11px;line-height:11px;letter-spacing:-0.284px;color:#bdbdbd;">300</span>
<span class="t" style="left:1231.00px;top:108.59px;font-size:11px;line-height:11px;letter-spacing:-0.117px;color:#bdbdbd;">450</span>
<span class="t" style="left:1288.00px;top:108.59px;font-size:11px;line-height:11px;letter-spacing:-0.117px;color:#bdbdbd;">600</span>
<span class="t" style="left:1345.00px;top:108.59px;font-size:11px;line-height:11px;letter-spacing:-0.117px;color:#bdbdbd;">750</span>
<span class="t" style="left:1402.00px;top:108.59px;font-size:11px;line-height:11px;letter-spacing:-0.117px;color:#bdbdbd;">900</span>
<span class="t" style="left:1456.50px;top:108.59px;font-size:11px;line-height:11px;letter-spacing:-0.367px;color:#bdbdbd;">1050</span>
<span class="t" style="left:1513.50px;top:108.59px;font-size:11px;line-height:11px;letter-spacing:-0.367px;color:#bdbdbd;">1200</span>
<div style="left:1570.5px;top:110px;width:16.5px;height:10px;overflow:hidden;"><span class="t" style="left:0;top:-1.4px;font-size:11px;line-height:11px;letter-spacing:-0.35px;color:#bdbdbd;">1350</span></div>
<div style="left:546px;top:137.2px;width:4px;height:1px;background:#a8a8a8;"></div>
<div style="left:546px;top:148.6px;width:4px;height:1px;background:#a8a8a8;"></div>
<div style="left:546px;top:160px;width:4px;height:1px;background:#a8a8a8;"></div>
<div style="left:535px;top:163px;width:5.5px;height:1.2px;background:#a8a8a8;"></div>
<div style="left:550px;top:127px;width:1037px;height:430.5px;background:#000;"></div>
<div style="left:703.4px;top:137px;width:729.6px;height:410px;background:#080808;"></div>
<span class="t" style="left:570.00px;top:461.20px;font-size:13px;line-height:13px;letter-spacing:-0.970px;color:#ececec;">Hold S</span>
<span class="t" style="left:605.80px;top:461.20px;font-size:13px;line-height:13px;letter-spacing:-0.553px;color:#555;">Direct Layer Selection</span>
<span class="t" style="left:570.00px;top:475.20px;font-size:13px;line-height:13px;letter-spacing:-1.200px;color:#ececec;">Space</span>
<span class="t" style="left:603.00px;top:475.20px;font-size:13px;line-height:13px;letter-spacing:-0.595px;color:#555;">Play/ Stop</span>
<span class="t" style="left:570.00px;top:489.20px;font-size:13px;line-height:13px;letter-spacing:-0.849px;color:#ececec;">Space + click + drag</span>
<span class="t" style="left:674.00px;top:489.20px;font-size:13px;line-height:13px;letter-spacing:-1.200px;color:#555;">Pan</span>
<span class="t" style="left:570.00px;top:503.20px;font-size:13px;line-height:13px;letter-spacing:-0.589px;color:#ececec;">Alt + click + drag</span>
<span class="t" style="left:658.80px;top:503.20px;font-size:13px;line-height:13px;letter-spacing:-0.471px;color:#555;">Move Pivot Point</span>
<span class="t" style="left:570.00px;top:517.20px;font-size:13px;line-height:13px;letter-spacing:-0.442px;color:#ececec;">Shift</span>
<span class="t" style="left:596.80px;top:517.20px;font-size:13px;line-height:13px;letter-spacing:-0.888px;color:#555;">Enable Snapping</span>
<span class="t" style="left:570.00px;top:537.30px;font-size:13px;line-height:13px;letter-spacing:-0.397px;color:#f0f0f0;">00:00:00:00</span>
<span class="t" style="left:998.00px;top:537.30px;font-size:13px;line-height:13px;letter-spacing:-0.344px;color:#f0f0f0;">Viewport Quality: High</span>
<div style="left:530px;top:557.5px;width:1057px;height:22.5px;background:#454545;"></div>
<div style="left:536px;top:561px;width:76.5px;height:15.5px;background:#2a2a2a;border-radius:3px;"></div>
<svg style="left:600.5px;top:566.5px;" width="10" height="6.5" viewBox="0 0 10 6.5"><path d="M1 1 L5.0 5.0 L9 1" fill="none" stroke="#c4c4c4" stroke-width="1"/></svg>
<div style="left:866px;top:559px;width:99.5px;height:20px;background:#2c2c2c;border:1px solid #1f1f1f;border-radius:4px;box-shadow:inset 0 1px 0 #4c4c4c;"></div>
<div style="left:885.5px;top:560px;width:1px;height:18px;background:#1f1f1f;"></div>
<div style="left:905.5px;top:560px;width:1px;height:18px;background:#1f1f1f;"></div>
<div style="left:925.5px;top:560px;width:1px;height:18px;background:#1f1f1f;"></div>
<div style="left:945.5px;top:560px;width:1px;height:18px;background:#1f1f1f;"></div>
<svg style="left:866px;top:559px;" width="100" height="21" viewBox="0 0 100 21"><g fill="#cfcfcf"><rect x="3.8" y="5" width="2.2" height="9.8"/><path d="M7.5 10 L15.2 5 V14.8 Z"/><path d="M24.3 10 L31.9 5 V14.8 Z"/><rect x="34" y="5" width="2.2" height="9.8"/><path d="M44.8 5 L54 10 L44.8 14.9 Z"/><rect x="63.9" y="5" width="2.2" height="9.8"/><path d="M68 5 L75.7 10 L68 14.8 Z"/><path d="M84.8 5 L92.5 10 L84.8 14.8 Z"/><rect x="94" y="5" width="2.2" height="9.8"/></g></svg>
<div style="left:971.5px;top:559px;width:19.2px;height:20px;background:#2c2c2c;border:1px solid #1f1f1f;border-radius:4px;box-shadow:inset 0 1px 0 #4c4c4c;"></div>
<svg style="left:971px;top:559px;" width="21" height="21" viewBox="0 0 21 21"><path d="M10 6.6 H5.2 Q3.6 6.6 3.6 8.2 V12 Q3.6 13.6 5.2 13.6 H15 Q16.6 13.6 16.6 12 V9.4" fill="none" stroke="#cfcfcf" stroke-width="1.1"/><path d="M10.8 4.1 V9.6 L15.8 6.9 Z" fill="#cfcfcf"/></svg>
<div style="left:1232px;top:560.5px;width:37px;height:17px;background:#2c2c2c;border-radius:3px;"></div>
<svg style="left:1232px;top:563px;" width="18" height="12" viewBox="0 0 18 12"><path d="M1.2 6 L4.2 2 H15 V10 H4.2 Z" fill="#dadada"/><circle cx="6.2" cy="6" r="1.7" fill="#2c2c2c"/></svg>
<span class="t" style="left:1258.20px;top:562.70px;font-size:13px;line-height:13px;letter-spacing:-0.200px;color:#8c8c8c;">0</span>
<div style="left:1272px;top:559px;width:31.3px;height:20px;background:#2c2c2c;border:1px solid #222;border-radius:4px;"></div>
<div style="left:1290.5px;top:560px;width:1px;height:18px;background:#3a3a3a;"></div>
<svg style="left:1291px;top:559.5px;" width="14" height="20" viewBox="0 0 14 20"><path d="M3.6 6.6 L9.0 9.6 L3.6 12.6 Z" fill="none" stroke="#8a8a8a" stroke-width="0.9"/></svg>
<svg style="left:1272px;top:559.5px;" width="20" height="20" viewBox="0 0 20 20"><path d="M3.8 7.2 H6.4 L10.2 3.8 V15.4 L6.4 12 H3.8 Z" fill="#2ecc71"/><path d="M12 6.6 Q13.8 9.6 12 12.6 M14.2 4.6 Q17 9.6 14.2 14.6" fill="none" stroke="#2ecc71" stroke-width="1.3"/></svg>
<div style="left:1307.5px;top:559px;width:30.6px;height:20px;background:#2c2c2c;border:1px solid #222;border-radius:4px;"></div>
<div style="left:1308.5px;top:560px;width:18.0px;height:18px;background:#484848;border-radius:3px 0 0 3px;"></div>
<div style="left:1326.0px;top:560px;width:1px;height:18px;background:#2a2a2a;"></div>
<svg style="left:1326.5px;top:559.5px;" width="14" height="20" viewBox="0 0 14 20"><path d="M3.6 6.6 L9.0 9.6 L3.6 12.6 Z" fill="none" stroke="#8a8a8a" stroke-width="0.9"/></svg>
<svg style="left:1307.5px;top:559.5px;" width="20" height="20" viewBox="0 0 20 20"><path d="M13.3 11 L10.5 7.5 A2.9 2.9 0 0 0 5.9 11.1 L8.7 14.6" fill="none" stroke="#e0e0e0" stroke-width="2.2"/><path d="M13.3 11 L12.4 9.9 M8.7 14.6 L7.8 13.5" stroke="#a0a0a0" stroke-width="2.2"/></svg>
<div style="left:1342.5px;top:559px;width:30.8px;height:20px;background:#2c2c2c;border:1px solid #222;border-radius:4px;"></div>
<div style="left:1343.5px;top:560px;width:18.0px;height:18px;background:#484848;border-radius:3px 0 0 3px;"></div>
<div style="left:1361.0px;top:560px;width:1px;height:18px;background:#2a2a2a;"></div>
<svg style="left:1361.5px;top:559.5px;" width="14" height="20" viewBox="0 0 14 20"><path d="M3.6 6.6 L9.0 9.6 L3.6 12.6 Z" fill="none" stroke="#8a8a8a" stroke-width="0.9"/></svg>
<svg style="left:1342.5px;top:559.5px;" width="20" height="20" viewBox="0 0 20 20"><path d="M7.4 2.6 V16.6 M12.5 2.6 V16.6 M2.9 7 H17 M2.9 11.8 H17" stroke="#e0e0e0" stroke-width="1.05" fill="none"/></svg>
<div style="left:1377px;top:559px;width:19.7px;height:20px;background:#2c2c2c;border:1px solid #222;border-radius:4px;"></div>
<svg style="left:1377px;top:559.5px;" width="20" height="20" viewBox="0 0 20 20"><g fill="#2ecc71"><rect x="2.6" y="4.6" width="4" height="3"/><rect x="2.6" y="9" width="4" height="5.8"/><rect x="8.5" y="11.5" width="9.2" height="3.3"/></g><rect x="9.2" y="4.6" width="7.8" height="4.8" fill="none" stroke="#2ecc71" stroke-width="1.4"/></svg>
<div style="left:1400.5px;top:559px;width:19.2px;height:20px;background:#2c2c2c;border:1px solid #222;border-radius:4px;"></div>
<div style="left:1401.5px;top:560px;width:17.2px;height:18px;background:#484848;border-radius:3px;"></div>
<svg style="left:1400.5px;top:559.5px;" width="20" height="20" viewBox="0 0 20 20"><path d="M3.2 5.2 L8 9.6 L3.2 14 Z" fill="#e0e0e0"/><path d="M8 5.2 L12 9.6 L8 14 M12 5.2 L16 9.6 L12 14" fill="none" stroke="#e0e0e0" stroke-width="1.5"/></svg>
<div style="left:1423.6px;top:559px;width:30.8px;height:20px;background:#2c2c2c;border:1px solid #222;border-radius:4px;"></div>
<div style="left:1424.6px;top:560px;width:17.0px;height:18px;background:#484848;border-radius:3px 0 0 3px;"></div>
<div style="left:1441.1px;top:560px;width:1px;height:18px;background:#2a2a2a;"></div>
<svg style="left:1441.6px;top:559.5px;" width="14" height="20" viewBox="0 0 14 20"><path d="M3.6 6.6 L9.0 9.6 L3.6 12.6 Z" fill="none" stroke="#8a8a8a" stroke-width="0.9"/></svg>
<svg style="left:1423.6px;top:559.5px;" width="20" height="20" viewBox="0 0 20 20"><rect x="3.3" y="4.2" width="13" height="10.6" fill="none" stroke="#e0e0e0" stroke-width="1.1"/><rect x="3.3" y="12.6" width="13" height="2.6" fill="#e0e0e0"/></svg>
<div style="left:1458.3px;top:559px;width:31.1px;height:20px;background:#2c2c2c;border:1px solid #222;border-radius:4px;"></div>
<div style="left:1459.3px;top:560px;width:17.700000000000045px;height:18px;background:#484848;border-radius:3px 0 0 3px;"></div>
<div style="left:1476.5px;top:560px;width:1px;height:18px;background:#2a2a2a;"></div>
<svg style="left:1477px;top:559.5px;" width="14" height="20" viewBox="0 0 14 20"><path d="M3.6 6.6 L9.0 9.6 L3.6 12.6 Z" fill="none" stroke="#8a8a8a" stroke-width="0.9"/></svg>
<svg style="left:1458.3px;top:559.5px;" width="20" height="20" viewBox="0 0 20 20"><rect x="3.2" y="4" width="7.6" height="5" fill="none" stroke="#e0e0e0" stroke-width="1.1"/><path d="M5.6 11 H12.8 V6.4 M8 13.2 H15 V8.6 M10.4 15.4 H17.2 V10.8" fill="none" stroke="#bdbdbd" stroke-width="1"/></svg>
<div style="left:1493.5px;top:559px;width:30.5px;height:20px;background:#2c2c2c;border:1px solid #222;border-radius:4px;"></div>
<div style="left:1494.5px;top:560px;width:17.5px;height:18px;background:#484848;border-radius:3px 0 0 3px;"></div>
<div style="left:1511.5px;top:560px;width:1px;height:18px;background:#2a2a2a;"></div>
<svg style="left:1512px;top:559.5px;" width="14" height="20" viewBox="0 0 14 20"><path d="M3.6 6.6 L9.0 9.6 L3.6 12.6 Z" fill="none" stroke="#8a8a8a" stroke-width="0.9"/></svg>
<svg style="left:1493.5px;top:559.5px;" width="20" height="20" viewBox="0 0 20 20"><rect x="2.6" y="2.8" width="9" height="8.6" fill="#dcdcdc"/><rect x="8" y="8" width="8.4" height="8.2" fill="#484848" stroke="#e0e0e0" stroke-width="1.2"/></svg>
<div style="left:1528.2px;top:559px;width:31.1px;height:20px;background:#2c2c2c;border:1px solid #222;border-radius:4px;"></div>
<div style="left:1546.5px;top:560px;width:1px;height:18px;background:#3a3a3a;"></div>
<svg style="left:1547px;top:559.5px;" width="14" height="20" viewBox="0 0 14 20"><path d="M3.6 6.6 L9.0 9.6 L3.6 12.6 Z" fill="none" stroke="#8a8a8a" stroke-width="0.9"/></svg>
<svg style="left:1528.2px;top:559.5px;" width="20" height="20" viewBox="0 0 20 20"><rect x="3.8" y="3.8" width="3" height="3" fill="#2ecc71"/><rect x="3.8" y="9.8" width="3" height="3" fill="#2ecc71"/><rect x="6.8" y="6.8" width="3" height="3" fill="#2ecc71"/><rect x="6.8" y="12.8" width="3" height="3" fill="#2ecc71"/><rect x="9.8" y="3.8" width="3" height="3" fill="#2ecc71"/><rect x="9.8" y="9.8" width="3" height="3" fill="#2ecc71"/><rect x="12.8" y="6.8" width="3" height="3" fill="#2ecc71"/><rect x="12.8" y="12.8" width="3" height="3" fill="#2ecc71"/></svg>
<div style="left:1563.4px;top:559px;width:19.2px;height:20px;background:#2c2c2c;border:1px solid #1f1f1f;border-radius:4px;box-shadow:inset 0 1px 0 #4c4c4c;"></div>
<svg style="left:1563.4px;top:559.5px;" width="19.2" height="19.5" viewBox="0 0 19.2 19.5"><g transform="translate(9.6 9.9)" fill="#e0e0e0"><rect x="-1.5" y="-7" width="3" height="3.4" transform="rotate(0)" /><rect x="-1.5" y="-7" width="3" height="3.4" transform="rotate(45)" /><rect x="-1.5" y="-7" width="3" height="3.4" transform="rotate(90)" /><rect x="-1.5" y="-7" width="3" height="3.4" transform="rotate(135)" /><rect x="-1.5" y="-7" width="3" height="3.4" transform="rotate(180)" /><rect x="-1.5" y="-7" width="3" height="3.4" transform="rotate(225)" /><rect x="-1.5" y="-7" width="3" height="3.4" transform="rotate(270)" /><rect x="-1.5" y="-7" width="3" height="3.4" transform="rotate(315)" /></g><circle cx="9.6" cy="9.9" r="3.9" fill="none" stroke="#e0e0e0" stroke-width="2.2"/></svg>
<div style="left:494px;top:586px;width:1420px;height:22px;background:#1c1c1c;"></div>
<div style="left:494px;top:586px;width:88.5px;height:22px;background:#454545;border-radius:4px 4px 0 0;"></div>
<span class="t" style="left:497.00px;top:591.00px;font-size:13px;line-height:13px;letter-spacing:-0.425px;color:#e6e6e6;">Scene Window</span>
<div style="left:584px;top:586px;width:100px;height:22px;background:#262626;border-radius:4px 4px 0 0;"></div>
<span class="t" style="left:589.00px;top:591.00px;font-size:13px;line-height:13px;letter-spacing:-0.515px;color:#e6e6e6;">JavaScript Editor</span>
<div style="left:685px;top:586px;width:111px;height:22px;background:#262626;border-radius:4px 4px 0 0;"></div>
<span class="t" style="left:691.00px;top:591.00px;font-size:13px;line-height:13px;letter-spacing:-0.733px;color:#e6e6e6;">Dependency Graph</span>
<div style="left:494px;top:608px;width:1420px;height:3px;background:#1c1c1c;"></div>
<div style="left:494px;top:610px;width:1415px;height:62px;background:#454545;border-radius:0 4px 0 0;"></div>
<span class="t" style="left:1166.00px;top:613.30px;font-size:13px;line-height:13px;letter-spacing:-0.546px;color:#e6e6e6;">Composition 1</span>
<div style="left:497px;top:632px;width:487px;height:20px;background:#272727;border-radius:10px;"></div>
<span class="t" style="left:520.50px;top:636.20px;font-size:13px;line-height:13px;letter-spacing:-0.965px;color:#8c8c8c;">Enter a Layer name</span>
<div style="left:987px;top:632px;width:19.5px;height:19.5px;background:#2c2c2c;border:1px solid #1f1f1f;border-radius:4px;"></div>
<svg style="left:987px;top:632px;" width="20" height="20" viewBox="0 0 20 20"><path d="M9.8 4.6 V14.8 M4.7 9.7 H14.9" stroke="#f0f0f0" stroke-width="2"/><path d="M18.3 14.2 V18.2 H14.3 Z" fill="#6fc5a7"/></svg>
<div style="left:1031.3px;top:632px;width:19.4px;height:19.5px;background:#484848;border:1px solid #262626;border-radius:4px;"></div>
<svg style="left:1031.3px;top:632px;" width="20" height="20" viewBox="0 0 20 20"><circle cx="7.2" cy="13" r="4.2" fill="#5a5a5a"/><circle cx="8.8" cy="11.2" r="4.2" fill="#777"/><circle cx="10.4" cy="9.2" r="4.2" fill="#999"/><circle cx="12.4" cy="7" r="4.3" fill="#dcdcdc"/></svg>
<div style="left:1053.4px;top:632px;width:19px;height:19.5px;background:#2c2c2c;border:1px solid #1f1f1f;border-radius:4px;"></div>
<svg style="left:1053.4px;top:632px;" width="20" height="20" viewBox="0 0 20 20"><g fill="#e0e0e0"><circle cx="5.2" cy="5" r="1.1"/><circle cx="12.2" cy="5.2" r="1.1"/><circle cx="5.2" cy="11.8" r="1.1"/><path d="M11.6 8 L12.6 11 L15.6 12 L12.6 13 L11.6 16 L10.6 13 L7.6 12 L10.6 11 Z"/></g><path d="M18.3 14.2 V18.2 H14.3 Z" fill="#6fc5a7"/></svg>
<div style="left:1075.1px;top:632px;width:19.4px;height:19.5px;background:#2c2c2c;border:1px solid #1f1f1f;border-radius:4px;"></div>
<svg style="left:1075.1px;top:632px;" width="20" height="20" viewBox="0 0 20 20"><g stroke="#e0e0e0" stroke-width="1" fill="#2c2c2c"><path d="M3 5 H5 M10.5 5 H16.6 M3 10 H10 M15.4 10 H16.6 M3 15 H5 M10.5 15 H14"/><circle cx="7.8" cy="5" r="1.7"/><circle cx="12.6" cy="10" r="1.7"/><circle cx="7.8" cy="15" r="1.7"/></g><path d="M18.3 14.2 V18.2 H14.3 Z" fill="#6fc5a7"/></svg>
<div style="left:1097px;top:632px;width:94px;height:20px;background:#2a2a2a;border-radius:3px;"></div>
<span class="t" style="left:1101.30px;top:636.00px;font-size:13px;line-height:13px;letter-spacing:-0.200px;color:#4c4c4c;">F</span>
<span class="t" style="left:1113.70px;top:636.00px;font-size:13px;line-height:13px;letter-spacing:-0.200px;color:#e0e0e0;">0</span>
<div style="left:494px;top:671px;width:699px;height:1px;background:#3a3a3a;"></div>
<svg style="left:575px;top:656px;" width="13" height="13" viewBox="0 0 13 13"><path d="M0.9 12.1 L1.9 10 L7.4 4.5 L8.6 5.7 L3.1 11.2 Z" fill="none" stroke="#bdbdbd" stroke-width="0.9"/><path d="M6.4 3.2 L9.9 6.7 L11 5.6 L10.2 4.8 L11.9 3.1 Q12.7 1.8 11.7 0.9 Q10.8 0.1 9.7 0.9 L8.1 2.6 L7.4 1.9 Z" fill="#bdbdbd"/></svg>
<svg style="left:592px;top:658px;" width="18" height="12" viewBox="0 0 18 12"><path d="M1.2 6 L4.2 2 H15 V10 H4.2 Z" fill="#dadada"/><circle cx="6.2" cy="6" r="1.7" fill="#454545"/></svg>
<span class="t" style="left:649.00px;top:657.00px;font-size:13px;line-height:13px;letter-spacing:-0.844px;color:#e6e6e6;">Name</span>
<div style="left:494px;top:672px;width:699px;height:304px;background:#292929;"></div>
<div style="left:1181px;top:674px;width:10px;height:287px;background:#4e4e4e;border-radius:5px;"></div>
<svg style="left:820px;top:792px;" width="32" height="34" viewBox="0 0 32 34"><g stroke="#a8a8a8" stroke-width="1" fill="none"><path d="M4 3.5 H22 M4 8.5 H27 M4 13.5 H20 M4 18.5 H14 M23 18.5 H25"/></g><path d="M16.5 15.4 V29.4 L19.6 26.6 L22 32 L24.6 31 L22.3 25.8 L26.6 25.4 Z" fill="#292929" stroke="#b4b4b4" stroke-width="1"/></svg>
<span class="t" style="left:689.00px;top:832.80px;font-size:13px;line-height:13px;letter-spacing:-0.627px;color:#858585;">Use the Create menu to add a layer to your Composition.</span>
<div style="left:494px;top:962.5px;width:699px;height:13.5px;background:#242424;"></div>
<div style="left:495px;top:964px;width:682.8px;height:10px;background:#4e4e4e;border-radius:5px;"></div>
<div style="left:1180px;top:963px;width:13px;height:12.5px;background:#2a2a2a;"></div>
<div style="left:494px;top:976px;width:699px;height:22px;background:#454545;"></div>
<div style="left:497.5px;top:978px;width:19.5px;height:18.5px;background:#2c2c2c;border:1px solid #1f1f1f;border-radius:4px;"></div>
<svg style="left:498px;top:981px;" width="18" height="12" viewBox="0 0 18 12"><path d="M2.2 6 L5 2.4 H15 V9.6 H5 Z" fill="#dadada"/><circle cx="6.6" cy="6" r="1.5" fill="#2c2c2c"/></svg>
<div style="left:984.5px;top:978px;width:19.5px;height:18.5px;background:#2c2c2c;border:1px solid #1f1f1f;border-radius:4px;"></div>
<svg style="left:984.5px;top:978px;" width="20" height="19" viewBox="0 0 20 19"><rect x="4.2" y="3.8" width="11" height="11" fill="none" stroke="#dcdcdc" stroke-width="1.1"/><circle cx="9.7" cy="9.3" r="1.7" fill="#dcdcdc"/></svg>
<div style="left:1007.5px;top:978px;width:182.5px;height:18px;background:#5f5f5f;border-radius:4px;"></div>
<div style="left:1007.5px;top:978px;width:86.5px;height:18px;background:#2a2a2a;border:1px solid #1f1f1f;border-radius:4px;"></div>
<svg style="left:1013px;top:981px;" width="14" height="13" viewBox="0 0 14 13"><path d="M1.2 2 H12.4 M3.8 6.2 H10.4 M1.2 10.4 H12.4" stroke="#2ecc71" stroke-width="1.8"/></svg>
<span class="t" style="left:1030.50px;top:981.00px;font-size:13px;line-height:13px;letter-spacing:-0.543px;color:#f0f0f0;">Time Editor</span>
<svg style="left:1101px;top:980px;" width="15" height="15" viewBox="0 0 15 15"><path d="M3.2 1.6 V11.8 M1 11.6 H13.8" stroke="#b8b8b8" stroke-width="1" fill="none"/><path d="M3.4 11.4 L12.4 3.6" stroke="#9a9a9a" stroke-width="1"/></svg>
<span class="t" style="left:1119.00px;top:981.00px;font-size:13px;line-height:13px;letter-spacing:-0.558px;color:#e6e6e6;">Graph Editor</span>
<div style="left:1193px;top:630px;width:7px;height:368px;background:#1c1c1c;"></div>
<div style="left:1195.6px;top:808px;width:1.2px;height:1px;background:#bdbdbd;"></div>
<div style="left:1195.6px;top:810px;width:1.2px;height:1px;background:#bdbdbd;"></div>
<div style="left:1195.6px;top:812px;width:1.2px;height:1px;background:#bdbdbd;"></div>
<div style="left:1195.6px;top:814px;width:1.2px;height:1px;background:#bdbdbd;"></div>
<div style="left:1195.6px;top:816px;width:1.2px;height:1px;background:#bdbdbd;"></div>
<div style="left:1195.6px;top:818px;width:1.2px;height:1px;background:#bdbdbd;"></div>
<div style="left:1195.6px;top:820px;width:1.2px;height:1px;background:#bdbdbd;"></div>
<div style="left:1195.6px;top:822px;width:1.2px;height:1px;background:#bdbdbd;"></div>
<div style="left:1195.6px;top:824px;width:1.2px;height:1px;background:#bdbdbd;"></div>
<div style="left:1197.5px;top:630px;width:711.5px;height:24px;background:#292929;"></div>
<svg style="left:1197.5px;top:630px;" width="712" height="24" viewBox="0 0 712 24"><rect x="8.90" y="16.2" width="1.2" height="7.8" fill="#9c9c9c"/><rect x="17.40" y="21" width="1" height="3" fill="#9c9c9c"/><rect x="25.80" y="21" width="1" height="3" fill="#9c9c9c"/><rect x="34.20" y="21" width="1" height="3" fill="#9c9c9c"/><rect x="42.60" y="21" width="1" height="3" fill="#9c9c9c"/><rect x="50.90" y="16.2" width="1.2" height="7.8" fill="#9c9c9c"/><rect x="59.40" y="21" width="1" height="3" fill="#9c9c9c"/><rect x="67.80" y="21" width="1" height="3" fill="#9c9c9c"/><rect x="76.20" y="21" width="1" height="3" fill="#9c9c9c"/><rect x="84.60" y="21" width="1" height="3" fill="#9c9c9c"/><rect x="92.90" y="16.2" width="1.2" height="7.8" fill="#9c9c9c"/><rect x="101.40" y="21" width="1" height="3" fill="#9c9c9c"/><rect x="109.80" y="21" width="1" height="3" fill="#9c9c9c"/><rect x="118.20" y="21" width="1" height="3" fill="#9c9c9c"/><rect x="126.60" y="21" width="1" height="3" fill="#9c9c9c"/><rect x="134.90" y="16.2" width="1.2" height="7.8" fill="#9c9c9c"/><rect x="143.40" y="21" width="1" height="3" fill="#9c9c9c"/><rect x="151.80" y="21" width="1" height="3" fill="#9c9c9c"/><rect x="160.20" y="21" width="1" height="3" fill="#9c9c9c"/><rect x="168.60" y="21" width="1" height="3" fill="#9c9c9c"/><rect x="176.90" y="16.2" width="1.2" height="7.8" fill="#9c9c9c"/><rect x="185.40" y="21" width="1" height="3" fill="#9c9c9c"/><rect x="193.80" y="21" width="1" height="3" fill="#9c9c9c"/><rect x="202.20" y="21" width="1" height="3" fill="#9c9c9c"/><rect x="210.60" y="21" width="1" height="3" fill="#9c9c9c"/><rect x="218.90" y="16.2" width="1.2" height="7.8" fill="#9c9c9c"/><rect x="227.40" y="21" width="1" height="3" fill="#9c9c9c"/><rect x="235.80" y="21" width="1" height="3" fill="#9c9c9c"/><rect x="244.20" y="21" width="1" height="3" fill="#9c9c9c"/><rect x="252.60" y="21" width="1" height="3" fill="#9c9c9c"/><rect x="260.90" y="16.2" width="1.2" height="7.8" fill="#9c9c9c"/><rect x="269.40" y="21" width="1" height="3" fill="#9c9c9c"/><rect x="277.80" y="21" width="1" height="3" fill="#9c9c9c"/><rect x="286.20" y="21" width="1" height="3" fill="#9c9c9c"/><rect x="294.60" y="21" width="1" height="3" fill="#9c9c9c"/><rect x="302.90" y="16.2" width="1.2" height="7.8" fill="#9c9c9c"/><rect x="311.40" y="21" width="1" height="3" fill="#9c9c9c"/><rect x="319.80" y="21" width="1" height="3" fill="#9c9c9c"/><rect x="328.20" y="21" width="1" height="3" fill="#9c9c9c"/><rect x="336.60" y="21" width="1" height="3" fill="#9c9c9c"/><rect x="344.90" y="16.2" width="1.2" height="7.8" fill="#9c9c9c"/><rect x="353.40" y="21" width="1" height="3" fill="#9c9c9c"/><rect x="361.80" y="21" width="1" height="3" fill="#9c9c9c"/><rect x="370.20" y="21" width="1" height="3" fill="#9c9c9c"/><rect x="378.60" y="21" width="1" height="3" fill="#9c9c9c"/><rect x="386.90" y="16.2" width="1.2" height="7.8" fill="#9c9c9c"/><rect x="395.40" y="21" width="1" height="3" fill="#9c9c9c"/><rect x="403.80" y="21" width="1" height="3" fill="#9c9c9c"/><rect x="412.20" y="21" width="1" height="3" fill="#9c9c9c"/><rect x="420.60" y="21" width="1" height="3" fill="#9c9c9c"/><rect x="428.90" y="16.2" width="1.2" height="7.8" fill="#9c9c9c"/><rect x="437.40" y="21" width="1" height="3" fill="#9c9c9c"/><rect x="445.80" y="21" width="1" height="3" fill="#9c9c9c"/><rect x="454.20" y="21" width="1" height="3" fill="#9c9c9c"/><rect x="462.60" y="21" width="1" height="3" fill="#9c9c9c"/><rect x="470.90" y="16.2" width="1.2" height="7.8" fill="#9c9c9c"/><rect x="479.40" y="21" width="1" height="3" fill="#9c9c9c"/><rect x="487.80" y="21" width="1" height="3" fill="#9c9c9c"/><rect x="496.20" y="21" width="1" height="3" fill="#9c9c9c"/><rect x="504.60" y="21" width="1" height="3" fill="#9c9c9c"/><rect x="512.90" y="16.2" width="1.2" height="7.8" fill="#9c9c9c"/><rect x="521.40" y="21" width="1" height="3" fill="#9c9c9c"/><rect x="529.80" y="21" width="1" height="3" fill="#9c9c9c"/><rect x="538.20" y="21" width="1" height="3" fill="#9c9c9c"/><rect x="546.60" y="21" width="1" height="3" fill="#9c9c9c"/><rect x="554.90" y="16.2" width="1.2" height="7.8" fill="#9c9c9c"/><rect x="563.40" y="21" width="1" height="3" fill="#9c9c9c"/><rect x="571.80" y="21" width="1" height="3" fill="#9c9c9c"/><rect x="580.20" y="21" width="1" height="3" fill="#9c9c9c"/><rect x="588.60" y="21" width="1" height="3" fill="#9c9c9c"/><rect x="596.90" y="16.2" width="1.2" height="7.8" fill="#9c9c9c"/><rect x="605.40" y="21" width="1" height="3" fill="#9c9c9c"/><rect x="613.80" y="21" width="1" height="3" fill="#9c9c9c"/><rect x="622.20" y="21" width="1" height="3" fill="#9c9c9c"/><rect x="630.60" y="21" width="1" height="3" fill="#9c9c9c"/><rect x="638.90" y="16.2" width="1.2" height="7.8" fill="#9c9c9c"/><rect x="647.40" y="21" width="1" height="3" fill="#9c9c9c"/><rect x="655.80" y="21" width="1" height="3" fill="#9c9c9c"/><rect x="664.20" y="21" width="1" height="3" fill="#9c9c9c"/><rect x="672.60" y="21" width="1" height="3" fill="#9c9c9c"/><rect x="680.90" y="16.2" width="1.2" height="7.8" fill="#9c9c9c"/><rect x="689.40" y="21" width="1" height="3" fill="#9c9c9c"/><rect x="697.80" y="21" width="1" height="3" fill="#9c9c9c"/><rect x="706.20" y="21" width="1" height="3" fill="#9c9c9c"/></svg>
<span class="t" style="left:1201.70px;top:631.50px;font-size:13px;line-height:13px;letter-spacing:-0.200px;color:#e4e4e4;">0</span>
<span class="t" style="left:1241.80px;top:631.50px;font-size:13px;line-height:13px;letter-spacing:-0.929px;color:#e4e4e4;">15</span>
<span class="t" style="left:1283.00px;top:631.50px;font-size:13px;line-height:13px;letter-spacing:0.021px;color:#e4e4e4;">30</span>
<span class="t" style="left:1325.00px;top:631.50px;font-size:13px;line-height:13px;letter-spacing:0.021px;color:#e4e4e4;">45</span>
<span class="t" style="left:1367.00px;top:631.50px;font-size:13px;line-height:13px;letter-spacing:0.021px;color:#e4e4e4;">60</span>
<span class="t" style="left:1409.50px;top:631.50px;font-size:13px;line-height:13px;letter-spacing:-0.229px;color:#e4e4e4;">75</span>
<span class="t" style="left:1451.50px;top:631.50px;font-size:13px;line-height:13px;letter-spacing:-0.229px;color:#e4e4e4;">90</span>
<span class="t" style="left:1491.00px;top:631.50px;font-size:13px;line-height:13px;letter-spacing:-0.496px;color:#e4e4e4;">105</span>
<span class="t" style="left:1533.00px;top:631.50px;font-size:13px;line-height:13px;letter-spacing:-0.396px;color:#e4e4e4;">120</span>
<span class="t" style="left:1575.20px;top:631.50px;font-size:13px;line-height:13px;letter-spacing:-0.563px;color:#e4e4e4;">135</span>
<span class="t" style="left:1617.20px;top:631.50px;font-size:13px;line-height:13px;letter-spacing:-0.463px;color:#e4e4e4;">150</span>
<span class="t" style="left:1659.20px;top:631.50px;font-size:13px;line-height:13px;letter-spacing:-0.563px;color:#e4e4e4;">165</span>
<span class="t" style="left:1701.20px;top:631.50px;font-size:13px;line-height:13px;letter-spacing:-0.463px;color:#e4e4e4;">180</span>
<span class="t" style="left:1743.20px;top:631.50px;font-size:13px;line-height:13px;letter-spacing:-0.563px;color:#e4e4e4;">195</span>
<span class="t" style="left:1785.00px;top:631.50px;font-size:13px;line-height:13px;letter-spacing:-0.296px;color:#e4e4e4;">210</span>
<span class="t" style="left:1827.00px;top:631.50px;font-size:13px;line-height:13px;letter-spacing:-0.496px;color:#e4e4e4;">225</span>
<span class="t" style="left:1868.80px;top:631.50px;font-size:13px;line-height:13px;letter-spacing:-0.163px;color:#e4e4e4;">240</span>
<div style="left:1200px;top:654px;width:709px;height:16px;background:#454545;"></div>
<div style="left:1200px;top:670px;width:707px;height:292px;background:#292929;"></div>
<div style="left:1907px;top:670px;width:7px;height:292px;background:#262626;"></div>
<svg style="left:1199px;top:643px;" width="17" height="11" viewBox="0 0 17 11"><path d="M1 1.2 H15 L8.6 10 H7.4 Z" fill="#77ccb0"/></svg>
<div style="left:1202px;top:653px;width:5.5px;height:17.5px;background:#77ccb0;"></div>
<div style="left:1206px;top:670px;width:1.6px;height:292px;background:#528d7b;"></div>
<div style="left:1907px;top:653px;width:5.5px;height:18px;background:#77ccb0;border-radius:1px;"></div>
<div style="left:1200px;top:962px;width:714px;height:14px;background:#242424;"></div>
<div style="left:1201px;top:964px;width:712px;height:10px;background:#4e4e4e;border-radius:5px;"></div>
<div style="left:1200px;top:976px;width:714px;height:22px;background:#454545;"></div>
<div style="left:1203px;top:978px;width:17.6px;height:17px;background:#2a2a2a;border-radius:4px;border:1px solid #1f1f1f;"></div>
<svg style="left:1203px;top:978px;" width="18" height="17" viewBox="0 0 18 17"><path d="M2.2 3.9 H16" stroke="#e6e6e6" stroke-width="1.7"/><path d="M2.2 8.8 H3.8 M5.6 8.8 H16" stroke="#e6e6e6" stroke-width="1.5"/><path d="M2.2 13.4 H7.6 M9.2 13.4 H10.8" stroke="#e6e6e6" stroke-width="1.5"/><path d="M17 13 V16.4 H13.6 Z" fill="#6fc5a7"/></svg>
<div style="left:1224px;top:979px;width:150px;height:15.7px;background:#2a2a2a;border-radius:3px;"></div>
<span class="t" style="left:1226.40px;top:980.60px;font-size:13px;line-height:13px;letter-spacing:-0.575px;color:#f0f0f0;">Default Keyframe Layer</span>
<div style="left:1380px;top:979px;width:70px;height:15.7px;background:#2a2a2a;border-radius:3px;"></div>
<span class="t" style="left:1384.80px;top:980.60px;font-size:13px;line-height:13px;letter-spacing:-0.200px;color:#4c4c4c;">F</span>
<span class="t" style="left:1397.00px;top:980.60px;font-size:13px;line-height:13px;letter-spacing:-0.200px;color:#cfcfcf;">-</span>
<span class="t" style="left:1456.60px;top:980.60px;font-size:13px;line-height:13px;letter-spacing:-0.520px;color:#dcdcdc;">Align:</span>
<div style="left:1492.6px;top:978.3px;width:52.6px;height:17.2px;background:#2a2a2a;border:1px solid #1d1d1d;border-radius:4px;box-shadow:inset 0 1px 0 #444;"></div>
<div style="left:1510px;top:979.3px;width:1px;height:15.2px;background:#1d1d1d;"></div>
<div style="left:1527.6px;top:979.3px;width:1px;height:15.2px;background:#1d1d1d;"></div>
<svg style="left:1492.6px;top:978.8px;" width="53" height="18" viewBox="0 0 53 18"><rect x="2.4" y="1.2" width="1.2" height="14.2" fill="#e6e6e6"/><rect x="5.5" y="4.7" width="1.9" height="1.9" fill="#7fe0c4"/><rect x="8.5" y="4.7" width="3.1" height="1.9" fill="#e6e6e6"/><rect x="5.5" y="10.7" width="1.9" height="2" fill="#7fe0c4"/><rect x="8.5" y="10.7" width="6.9" height="2" fill="#e6e6e6"/><rect x="26.4" y="1.2" width="1.2" height="14.2" fill="#e6e6e6"/><rect x="23.5" y="4.7" width="0.9" height="1.9" fill="#e6e6e6"/><rect x="25.5" y="4.7" width="2.8" height="1.9" fill="#7fe0c4"/><rect x="29.5" y="4.7" width="0.9" height="1.9" fill="#e6e6e6"/><rect x="21.4" y="10.7" width="2.9" height="2" fill="#e6e6e6"/><rect x="25.5" y="10.7" width="2.8" height="2" fill="#7fe0c4"/><rect x="29.5" y="10.7" width="3" height="2" fill="#e6e6e6"/><rect x="49.4" y="1.2" width="1.2" height="14.2" fill="#e6e6e6"/><rect x="41.3" y="4.7" width="3" height="1.9" fill="#e6e6e6"/><rect x="45.4" y="4.7" width="2.1" height="1.9" fill="#7fe0c4"/><rect x="37.4" y="10.7" width="6.9" height="2" fill="#e6e6e6"/><rect x="45.4" y="10.7" width="2.1" height="2" fill="#7fe0c4"/></svg>
<div style="left:1549.9px;top:978.3px;width:16.6px;height:17.2px;background:#484848;border:1px solid #262626;border-radius:4px;"></div>
<svg style="left:1549.9px;top:978.8px;" width="17" height="18" viewBox="0 0 17 18"><g fill="none" stroke="#a8a8a8" stroke-width="1"><path d="M5 2.9 H11.6 M5 14.3 H11.6 M2.8 5.2 V12 M13.8 5.2 V12"/></g><g fill="#a0a0a0"><rect x="1.5" y="1.6" width="2.6" height="2.6"/><rect x="12.5" y="1.6" width="2.6" height="2.6"/><rect x="1.5" y="13" width="2.6" height="2.6"/><rect x="12.5" y="13" width="2.6" height="2.6"/></g><rect x="7.3" y="7.6" width="2" height="2" fill="#e6e6e6"/></svg>
<div style="left:1570.3px;top:977px;width:30.5px;height:18.5px;background:#2c2c2c;border:1px solid #222;border-radius:4px;"></div>
<div style="left:1571.3px;top:978px;width:17.5px;height:16.5px;background:#484848;border-radius:3px 0 0 3px;"></div>
<div style="left:1588.6px;top:978px;width:1px;height:16.5px;background:#2a2a2a;"></div>
<svg style="left:1570.3px;top:977px;" width="31" height="19" viewBox="0 0 31 19"><g transform="translate(-1.2 -2.4) scale(1.17)"><path d="M13.3 11 L10.5 7.5 A2.9 2.9 0 0 0 5.9 11.1 L8.7 14.6" fill="none" stroke="#e6e6e6" stroke-width="2.1"/><path d="M13.3 11 L12.4 9.9 M8.7 14.6 L7.8 13.5" stroke="#a0a0a0" stroke-width="2.1"/></g><path d="M22.200000000000003 6.6000000000000005 L27.200000000000003 9.4 L22.200000000000003 12.2 Z" fill="none" stroke="#8a8a8a" stroke-width="0.9"/></svg>
<div style="left:1605.6px;top:977px;width:30.4px;height:18.5px;background:#2c2c2c;border:1px solid #222;border-radius:4px;"></div>
<div style="left:1606.6px;top:978px;width:16.6px;height:16.5px;background:#484848;border-radius:3px 0 0 3px;"></div>
<div style="left:1623.1px;top:978px;width:1px;height:16.5px;background:#2a2a2a;"></div>
<svg style="left:1605.6px;top:977px;" width="31" height="19" viewBox="0 0 31 19"><path d="M2.4 9.8 H5.4 M6.9 3.8 V15.6 M9.3 6.8 V12.8 M11.2 8.6 V11 M12.6 9.8 H16.2" stroke="#e6e6e6" stroke-width="1" fill="none"/><path d="M22.200000000000003 6.8 L27.200000000000003 9.6 L22.200000000000003 12.399999999999999 Z" fill="none" stroke="#8a8a8a" stroke-width="0.9"/></svg>
<svg style="left:1743px;top:980px;" width="16" height="15" viewBox="0 0 16 15"><circle cx="7" cy="7" r="5.6" fill="none" stroke="#d8d8d8" stroke-width="1"/><path d="M4.4 7 H9.6" stroke="#d8d8d8" stroke-width="1"/><path d="M11.2 11.2 L13.6 13.4" stroke="#d8d8d8" stroke-width="1.6"/></svg>
<svg style="left:1887px;top:980px;" width="16" height="15" viewBox="0 0 16 15"><circle cx="7" cy="7" r="5.6" fill="none" stroke="#d8d8d8" stroke-width="1"/><path d="M4.4 7 H9.6" stroke="#d8d8d8" stroke-width="1"/><path d="M7 4.4 V9.6" stroke="#d8d8d8" stroke-width="1"/><path d="M11.2 11.2 L13.6 13.4" stroke="#d8d8d8" stroke-width="1.6"/></svg>
<div style="left:1770px;top:986.3px;width:112px;height:1.6px;background:#555;border-radius:1px;"></div>
<div style="left:1761.8px;top:982px;width:10.4px;height:10.4px;background:#7fd3b6;border-radius:50%;border:2px solid #6fc5a7;"></div>
<div style="left:494px;top:998px;width:1420px;height:5.5px;background:#111;"></div>
<div style="left:494px;top:1003.5px;width:1420px;height:22px;background:#3c3c3c;"></div>
<div style="left:498px;top:1010px;width:2px;height:2px;background:#8e8e8e;"></div>
<div style="left:498px;top:1014px;width:2px;height:2px;background:#8e8e8e;"></div>
<div style="left:498px;top:1018px;width:2px;height:2px;background:#8e8e8e;"></div>
<div style="left:507.5px;top:1005.5px;width:17.5px;height:18px;background:#2a2a2a;border:1px solid #1f1f1f;border-radius:4px;"></div>
<svg style="left:507.5px;top:1005.5px;" width="18" height="18" viewBox="0 0 18 18"><path d="M2.6 3.2 H13.6 V11.4 H11.6 L13.4 14.6 L8.6 11.4 H2.6 Z" fill="#e6e6e6"/><path d="M4 5.4 H12.2 M4 7.4 H12.2 M4 9.4 H12.2" stroke="#2a2a2a" stroke-width="0.9"/><path d="M17 13.6 V17 H13.6 Z" fill="#6fc5a7"/></svg>
<div style="left:528px;top:1008px;width:17.8px;height:13.8px;background:#2ecc71;border-radius:2px;"></div>
<span class="t" style="left:533.50px;top:1009.27px;font-size:11.5px;line-height:11.5px;letter-spacing:-0.200px;color:#14361f;">0</span>
<div style="left:553.8px;top:1012px;width:6.2px;height:6.2px;background:#2ecc71;border-radius:50%;"></div>
<span class="t" style="left:565.00px;top:1008.80px;font-size:13px;line-height:13px;letter-spacing:-0.557px;color:#e6e6e6;">Composition Settings... (Ctrl+K)</span>
<div style="left:1477px;top:1006px;width:80px;height:17.8px;background:#d5b95f;border-radius:2px;"></div>
<span class="t" style="left:1482.60px;top:1008.80px;font-size:13px;line-height:13px;letter-spacing:-0.911px;color:#2e2810;">Feedback</span>
<div style="left:1560px;top:1006px;width:108.70000000000005px;height:17.8px;background:#2ecc71;border-radius:2px;"></div>
<span class="t" style="left:1565.70px;top:1008.80px;font-size:13px;line-height:13px;letter-spacing:-0.668px;color:#0f3a20;">Upgrade to Pro</span>
<div style="left:1671.7px;top:1006px;width:129.89999999999986px;height:17.8px;background:#c38ff6;border-radius:2px;"></div>
<span class="t" style="left:1677.00px;top:1008.80px;font-size:13px;line-height:13px;letter-spacing:-0.598px;color:#2d1a45;">New Beta Available</span>
<div style="left:1805px;top:1006px;width:106px;height:17.8px;background:#3fa9f5;border-radius:2px;"></div>
<span class="t" style="left:1810.40px;top:1008.80px;font-size:13px;line-height:13px;letter-spacing:-0.688px;color:#0c2a45;">Tips and Tricks</span>
<svg style="left:1537.5px;top:1007.5px;" width="15" height="15" viewBox="0 0 15 15"><path d="M2.2 1.2 H10.2 L12.6 3.6 V13.6 H2.2 Z" fill="#f4f4f4" stroke="#b9b9b9" stroke-width="0.6"/><path d="M4 4.4 H9 M4 6.6 H10.6 M4 8.8 H8" stroke="#9aa8b8" stroke-width="0.8"/><path d="M6.4 12.4 L7.2 9.8 L12.4 4.6 L14.2 6.4 L9 11.6 Z" fill="#f2b33d"/><path d="M12.4 4.6 L13.2 3.8 Q14 3.2 14.7 3.9 Q15.3 4.7 14.7 5.4 L14.2 6.4 Z" fill="#e4576b"/><path d="M6.4 12.4 L7.2 9.8 L9 11.6 Z" fill="#5a4a3a"/></svg>
<svg style="left:1647.5px;top:1008px;" width="16" height="14" viewBox="0 0 16 14"><g fill="#f5c63c"><path d="M1.6 13 V7.4 L2.4 4.4 Q2.8 3.6 3.6 4 L4 6.2 L4.6 3 Q5 2.2 5.8 2.6 L6 6 L6.8 4 Q7.4 3.4 7.8 4.2 V13 Z"/><path d="M14.4 13 V7.4 L13.6 4.4 Q13.2 3.6 12.4 4 L12 6.2 L11.4 3 Q11 2.2 10.2 2.6 L10 6 L9.2 4 Q8.6 3.4 8.2 4.2 V13 Z"/></g><path d="M7.9 5 V13" stroke="#d89b20" stroke-width="0.6"/></svg>
<svg style="left:1783px;top:1007.5px;" width="15" height="15" viewBox="0 0 15 15"><circle cx="7.4" cy="8.4" r="5.8" fill="#f7c744"/><path d="M3.2 4.6 L6.2 0.6 L9.4 3.6 Z" fill="#e2547c"/><circle cx="5.4" cy="7.6" r="0.8" fill="#6b4a18"/><circle cx="9.6" cy="7.6" r="0.8" fill="#6b4a18"/><path d="M5.4 10.4 Q7.4 12.4 9.6 10.4" fill="none" stroke="#6b4a18" stroke-width="0.8"/><path d="M10.8 10.2 L14.4 9 L13.6 12.4 Z" fill="#5fa6e8"/><circle cx="1.6" cy="11.6" r="0.8" fill="#58c878"/><circle cx="13.4" cy="3.2" r="0.8" fill="#e85a5a"/></svg>
<svg style="left:1890.5px;top:1007.5px;" width="15" height="15" viewBox="0 0 15 15"><path d="M13.8 1.2 Q9.4 1.2 6.6 4.4 L4.4 7 L8 10.6 L10.6 8.4 Q13.8 5.6 13.8 1.2 Z" fill="#e8ecf2"/><path d="M13.8 1.2 Q11.6 1.2 10.4 2 L13 4.6 Q13.8 3.4 13.8 1.2 Z" fill="#e2445c"/><circle cx="9.8" cy="5.2" r="1.3" fill="#5aa0e6"/><path d="M4.8 6.6 L2 7 L4.2 4.8 L6.4 4.6 Z M8.4 10.2 L8 13 L10.2 10.8 L10.4 8.6 Z" fill="#e2445c"/><path d="M4.6 9 Q2.4 10 1.4 13.6 Q5 12.6 6 10.4 Z" fill="#f2a238"/></svg>
<div style="left:1593px;top:85px;width:321px;height:22px;background:#1c1c1c;"></div>
<div style="left:1593px;top:85px;width:40px;height:22px;background:#454545;border-radius:4px 4px 0 0;"></div>
<span class="t" style="left:1598.00px;top:89.80px;font-size:13px;line-height:13px;letter-spacing:-0.293px;color:#e6e6e6;">Color</span>
<div style="left:1633.5px;top:85px;width:69px;height:22px;background:#242424;border-radius:4px 4px 0 0;"></div>
<span class="t" style="left:1639.20px;top:89.80px;font-size:13px;line-height:13px;letter-spacing:-0.736px;color:#e6e6e6;">Add Layers</span>
<div style="left:1593px;top:107px;width:321px;height:377px;background:#454545;"></div>
<div style="left:1900.5px;top:107px;width:13.5px;height:377px;background:#3e3e3e;"></div>
<div style="left:1902.6px;top:107.5px;width:9px;height:302.5px;background:#565656;border-radius:4.5px;"></div>
<div style="left:1645.5px;top:119.75px;width:200px;height:200px;border-radius:50%;background:conic-gradient(from 90deg,#f00,#f0f,#00f,#0ff,#0f0,#ff0,#f00);"></div>
<div style="left:1670.5px;top:144.75px;width:150px;height:150px;background:#454545;border-radius:50%;"></div>
<div style="left:1702px;top:176px;width:90px;height:90px;background:linear-gradient(to right,#000,rgba(0,0,0,0)),linear-gradient(to bottom,#fff,#f00);"></div>
<svg style="left:1738px;top:169px;" width="15" height="15" viewBox="0 0 15 15"><circle cx="7.2" cy="7.2" r="5.8" fill="none" stroke="#e0e0e0" stroke-width="1"/></svg>
<svg style="left:1825.5px;top:212.8px;" width="15" height="15" viewBox="0 0 15 15"><circle cx="7.2" cy="7.2" r="5.8" fill="none" stroke="#f4f4f4" stroke-width="1"/></svg>
<div style="left:1600px;top:333px;width:22px;height:21.5px;background:#7a7a7a;border-radius:3px;"></div>
<span class="t" style="left:1625.00px;top:337.70px;font-size:13px;line-height:13px;letter-spacing:-0.642px;color:#e6e6e6;">Gray</span>
<div style="left:1871px;top:333px;width:22px;height:21.5px;background:#272727;border:1px solid #1c1c1c;border-radius:4px;"></div>
<svg style="left:1876px;top:337.5px;" width="13" height="13" viewBox="0 0 13 13"><path d="M0.9 12.1 L1.9 10 L7.4 4.5 L8.6 5.7 L3.1 11.2 Z" fill="none" stroke="#c8c8c8" stroke-width="0.9"/><path d="M6.4 3.2 L9.9 6.7 L11 5.6 L10.2 4.8 L11.9 3.1 Q12.7 1.8 11.7 0.9 Q10.8 0.1 9.7 0.9 L8.1 2.6 L7.4 1.9 Z" fill="#c8c8c8"/></svg>
<div style="left:1600px;top:360px;width:49.5px;height:18px;background:#484848;border:1px solid #343434;border-radius:3px;"></div>
<span class="t" style="left:1603.20px;top:363.00px;font-size:13px;line-height:13px;letter-spacing:-0.773px;color:#e6e6e6;">Hex</span>
<svg style="left:1636px;top:366.5px;" width="10.5" height="6.5" viewBox="0 0 10.5 6.5"><path d="M1 1 L5.25 5.0 L9.5 1" fill="none" stroke="#c4c4c4" stroke-width="1"/></svg>
<div style="left:1653px;top:358px;width:240px;height:21.5px;background:#272727;border-radius:3px;"></div>
<span class="t" style="left:1657.50px;top:363.84px;font-size:12px;line-height:12px;letter-spacing:-0.200px;color:#555;">#</span>
<span class="t" style="left:1670.00px;top:363.00px;font-size:13px;line-height:13px;letter-spacing:-0.696px;color:#e0e0e0;">7a7a7a</span>
<div style="left:1600px;top:390px;width:232px;height:4.6px;background:#dedede;border-radius:2.3px;"></div>
<div style="left:1828.6px;top:386.6px;width:10.8px;height:10.8px;background:#6fbfa4;border:2px solid #7fd3b6;border-radius:50%;"></div>
<div style="left:1849px;top:384.5px;width:44px;height:15.5px;background:#272727;border-radius:3px;"></div>
<span class="t" style="left:1853.00px;top:386.00px;font-size:13px;line-height:13px;letter-spacing:-0.200px;color:#555;">A</span>
<span class="t" style="left:1866.00px;top:386.00px;font-size:13px;line-height:13px;letter-spacing:-0.296px;color:#e0e0e0;">255</span>
<div style="left:1597px;top:406.5px;width:299px;height:21.5px;background:#242424;"></div>
<div style="left:1599px;top:408px;width:148px;height:20px;background:#454545;border-radius:4px 4px 0 0;"></div>
<span class="t" style="left:1648.00px;top:411.00px;font-size:13px;line-height:13px;letter-spacing:-0.832px;color:#e6e6e6;">Swatches</span>
<span class="t" style="left:1793.00px;top:411.00px;font-size:13px;line-height:13px;letter-spacing:-0.436px;color:#a8a8a8;">Generator</span>
<div style="left:1598px;top:431px;width:257px;height:18px;background:#5a5a5a;border-radius:4px;"></div>
<div style="left:1598px;top:431px;width:63px;height:18px;background:#272727;border:1px solid #1e1e1e;border-radius:4px;"></div>
<svg style="left:1605px;top:434px;" width="13" height="12" viewBox="0 0 13 12"><path d="M1.4 1 V11 M4.4 1 V11" stroke="#2ecc71" stroke-width="1.7"/><path d="M7.2 1.2 L10.6 10.8" stroke="#2ecc71" stroke-width="1.8"/></svg>
<span class="t" style="left:1621.00px;top:434.00px;font-size:13px;line-height:13px;letter-spacing:-0.362px;color:#f0f0f0;">Library</span>
<svg style="left:1670px;top:433.5px;" width="12" height="13" viewBox="0 0 12 13"><path d="M0.8 2.2 V1 H5 L6 2.2 Z" fill="#d6d6d6"/><rect x="0.8" y="3.4" width="10" height="8" rx="0.6" fill="#d6d6d6"/><g fill="#5a5a5a"><rect x="2" y="5" width="1.4" height="1.2"/><rect x="4.4" y="5" width="5.2" height="1.2"/><rect x="2" y="7" width="1.4" height="1.2"/><rect x="4.4" y="7" width="5.2" height="1.2"/><rect x="2" y="9" width="1.4" height="1.2"/><rect x="4.4" y="9" width="5.2" height="1.2"/></g></svg>
<span class="t" style="left:1686.00px;top:434.00px;font-size:13px;line-height:13px;letter-spacing:-0.380px;color:#e6e6e6;">Project</span>
<svg style="left:1737px;top:433.5px;" width="10" height="13" viewBox="0 0 10 13"><path d="M0.8 0.8 H5.6 L8.6 3.8 V11.6 H0.8 Z M5.4 0.8 V4 H8.6" fill="none" stroke="#d6d6d6" stroke-width="1"/></svg>
<span class="t" style="left:1752.00px;top:434.00px;font-size:13px;line-height:13px;letter-spacing:-1.172px;color:#e6e6e6;">Scene</span>
<svg style="left:1799.5px;top:434px;" width="12" height="12" viewBox="0 0 12 12"><path d="M3.6 1 H8.4 Q10.8 1 10.8 3.4 V5.6 L5.6 10.8 H3.6 Q1.2 10.8 1.2 8.4 V3.4 Q1.2 1 3.6 1 Z" fill="none" stroke="#d6d6d6" stroke-width="1"/><path d="M5.6 10.6 V7.6 Q5.6 5.8 7.4 5.8 H10.6 Z" fill="#d6d6d6"/></svg>
<span class="t" style="left:1816.00px;top:434.00px;font-size:13px;line-height:13px;letter-spacing:-0.851px;color:#e6e6e6;">Labels</span>
<div style="left:1858px;top:431px;width:37px;height:18px;background:#5a5a5a;border-radius:4px;"></div>
<div style="left:1858px;top:431px;width:17.3px;height:18px;background:#272727;border:1px solid #1e1e1e;border-radius:4px;"></div>
<svg style="left:1858px;top:431px;" width="18" height="18" viewBox="0 0 18 18"><rect x="4.2" y="4.4" width="3.2" height="3.2" fill="#2ecc71"/><rect x="4.2" y="9.8" width="3.2" height="3.2" fill="#2ecc71"/><rect x="9.6" y="4.4" width="3.2" height="3.2" fill="#2ecc71"/><rect x="9.6" y="9.8" width="3.2" height="3.2" fill="#2ecc71"/></svg>
<svg style="left:1876px;top:431px;" width="18" height="18" viewBox="0 0 18 18"><path d="M3.2 5 H13.4 M3.2 8.6 H13.4 M3.2 12.2 H13.4" stroke="#e6e6e6" stroke-width="1"/></svg>
<div style="left:1598px;top:453px;width:275.5px;height:16.5px;background:#484848;border:1px solid #343434;border-radius:3px;"></div>
<span class="t" style="left:1601.80px;top:454.60px;font-size:13px;line-height:13px;letter-spacing:-0.816px;color:#e6e6e6;">new</span>
<svg style="left:1860.5px;top:458.5px;" width="10.5" height="6.8" viewBox="0 0 10.5 6.8"><path d="M1 1 L5.25 5.3 L9.5 1" fill="none" stroke="#c4c4c4" stroke-width="1"/></svg>
<div style="left:1880px;top:460.2px;width:2px;height:2px;background:#e0e0e0;"></div>
<div style="left:1885px;top:460.2px;width:2px;height:2px;background:#e0e0e0;"></div>
<div style="left:1890px;top:460.2px;width:2px;height:2px;background:#e0e0e0;"></div>
<div style="left:1598px;top:471px;width:298px;height:13px;background:#222;"></div>
<div style="left:1600px;top:472px;width:18px;height:12px;background:#964dff;border-radius:4px 4px 0 0;"></div>
<div style="left:1622px;top:472px;width:18px;height:12px;background:#4d9fff;border-radius:4px 4px 0 0;"></div>
<div style="left:1644px;top:472px;width:18px;height:12px;background:#ff784d;border-radius:4px 4px 0 0;"></div>
<div style="left:1666px;top:472px;width:18px;height:12px;background:#4dffae;border-radius:4px 4px 0 0;"></div>
<div style="left:1688px;top:472px;width:18px;height:12px;background:#ff4d61;border-radius:4px 4px 0 0;"></div>
<div style="left:1710px;top:472px;width:18px;height:12px;background:#ff4dc1;border-radius:4px 4px 0 0;"></div>
<div style="left:1732px;top:472px;width:18px;height:12px;background:#ffd24d;border-radius:4px 4px 0 0;"></div>
<div style="left:1754px;top:472px;width:18px;height:12px;background:#4169e1;border-radius:4px 4px 0 0;"></div>
<div style="left:1776px;top:472px;width:18px;height:12px;background:#59e6d5;border-radius:4px 4px 0 0;"></div>
<div style="left:1798px;top:472px;width:18px;height:12px;background:#da7fd8;border-radius:4px 4px 0 0;"></div>
<div style="left:1820px;top:472px;width:18px;height:12px;background:#b4ef8a;border-radius:4px 4px 0 0;"></div>
<div style="left:1842px;top:472px;width:18px;height:12px;background:#6a55ff;border-radius:4px 4px 0 0;"></div>
<div style="left:1593px;top:490px;width:321px;height:22px;background:#1c1c1c;"></div>
<div style="left:1593px;top:490px;width:38.5px;height:22px;background:#454545;border-radius:4px 4px 0 0;"></div>
<span class="t" style="left:1598.20px;top:494.70px;font-size:13px;line-height:13px;letter-spacing:-0.301px;color:#e6e6e6;">Align</span>
<div style="left:1593px;top:512px;width:321px;height:68px;background:#454545;"></div>
<span class="t" style="left:1601.00px;top:525.30px;font-size:13px;line-height:13px;letter-spacing:-0.401px;color:#e6e6e6;">Alignment</span>
<span class="t" style="left:1601.00px;top:552.60px;font-size:13px;line-height:13px;letter-spacing:-0.119px;color:#e6e6e6;">Distribution</span>
<div style="left:1790.3px;top:522.3px;width:53.4px;height:17.4px;background:#2d2d2d;border:1px solid #222;border-radius:4px;box-shadow:inset 0 1px 0 #484848;"></div>
<div style="left:1807.7px;top:523.3px;width:1px;height:15.4px;background:#222;"></div>
<div style="left:1825.8999999999999px;top:523.3px;width:1px;height:15.4px;background:#222;"></div>
<svg style="left:1790.3px;top:522.3px;" width="54" height="18" viewBox="0 0 54 18"><g fill="#e6e6e6"><rect x="2.6" y="2.7" width="1.1" height="13"/><rect x="5.8" y="5.7" width="5.9" height="2"/><rect x="5.8" y="10.7" width="9.9" height="2"/><rect x="26.6" y="2.7" width="1.1" height="13"/><rect x="23.7" y="5.7" width="7" height="2"/><rect x="21.7" y="10.7" width="11" height="2"/><rect x="49.7" y="2.7" width="1.1" height="13"/><rect x="42" y="5.7" width="5.7" height="2"/><rect x="37.8" y="10.7" width="9.9" height="2"/></g></svg>
<div style="left:1852.1px;top:522.3px;width:53.4px;height:17.4px;background:#2d2d2d;border:1px solid #222;border-radius:4px;box-shadow:inset 0 1px 0 #484848;"></div>
<div style="left:1869.5px;top:523.3px;width:1px;height:15.4px;background:#222;"></div>
<div style="left:1887.6999999999998px;top:523.3px;width:1px;height:15.4px;background:#222;"></div>
<svg style="left:1852.1px;top:522.3px;" width="54" height="18" viewBox="0 0 54 18"><g fill="#e6e6e6"><rect x="2" y="2.5" width="12.9" height="1.1"/><rect x="4.7" y="5.7" width="2" height="10"/><rect x="9.9" y="5.7" width="2" height="6"/><rect x="19.9" y="8.6" width="13" height="1.1"/><rect x="22.9" y="3.7" width="2" height="11"/><rect x="27.9" y="5.7" width="2" height="7"/><rect x="38.9" y="14.6" width="13" height="1.1"/><rect x="41.9" y="6.7" width="2" height="6"/><rect x="46.9" y="2.7" width="2" height="10"/></g></svg>
<div style="left:1790.3px;top:550.5px;width:53.4px;height:17.4px;background:#2d2d2d;border:1px solid #222;border-radius:4px;box-shadow:inset 0 1px 0 #484848;"></div>
<div style="left:1807.7px;top:551.5px;width:1px;height:15.4px;background:#222;"></div>
<div style="left:1825.8999999999999px;top:551.5px;width:1px;height:15.4px;background:#222;"></div>
<svg style="left:1790.3px;top:550.5px;" width="54" height="18" viewBox="0 0 54 18"><g fill="#e6e6e6"><rect x="2.6" y="1.5" width="1.1" height="14"/><rect x="13.7" y="1.5" width="1.1" height="14"/><rect x="7.7" y="4.5" width="2" height="8"/><rect x="19.7" y="2.4" width="14" height="1.1"/><rect x="19.7" y="13.5" width="14" height="1.1"/><rect x="22.7" y="7.5" width="8" height="2"/><rect x="39.7" y="8.5" width="2" height="4"/><rect x="43.7" y="6.5" width="2" height="4"/><rect x="47.7" y="4.5" width="2" height="4"/></g><g fill="none" stroke="#e6e6e6" stroke-width="1.1"><path d="M37.8 3.6 Q37.8 2 39.4 2 M49.8 2 Q51.4 2 51.4 3.6 M51.4 13.4 Q51.4 15 49.8 15 M39.4 15 Q37.8 15 37.8 13.4"/></g></svg>
<div style="left:169px;top:43px;width:224px;height:286.5px;background:#282828;box-shadow:2px 2px 3px rgba(0,0,0,0.38);"></div>
<div style="left:169px;top:66px;width:219px;height:1px;background:#222;"></div>
<div style="left:169px;top:67px;width:224px;height:1px;background:#636363;"></div>
<div style="left:169px;top:91px;width:219px;height:1px;background:#222;"></div>
<div style="left:169px;top:92px;width:224px;height:1px;background:#636363;"></div>
<div style="left:169px;top:256px;width:219px;height:1px;background:#222;"></div>
<div style="left:169px;top:257px;width:224px;height:1px;background:#636363;"></div>
<div style="left:169px;top:281px;width:219px;height:1px;background:#222;"></div>
<div style="left:169px;top:282px;width:224px;height:1px;background:#636363;"></div>
<div style="left:169px;top:164px;width:224px;height:22.5px;background:#6a6a6a;"></div>
<span class="t" style="left:191.00px;top:48.30px;font-size:13px;line-height:13px;letter-spacing:-0.776px;color:#e4e4e4;">Add Layers Popover...</span>
<span class="t" style="left:340.00px;top:48.30px;font-size:13px;line-height:13px;letter-spacing:-0.187px;color:#e4e4e4;">Ctrl+.</span>
<span class="t" style="left:191.00px;top:73.30px;font-size:13px;line-height:13px;letter-spacing:-0.333px;color:#e4e4e4;">Primitives</span>
<svg style="left:382px;top:75.3px;" width="7" height="9" viewBox="0 0 7 9"><path d="M1 0.6 L5.6 4.5 L1 8.4 Z" fill="#bcbcbc"/></svg>
<span class="t" style="left:191.00px;top:98.30px;font-size:13px;line-height:13px;letter-spacing:-0.410px;color:#e4e4e4;">Text</span>
<span class="t" style="left:191.00px;top:120.70px;font-size:13px;line-height:13px;letter-spacing:-0.588px;color:#e4e4e4;">Background</span>
<span class="t" style="left:340.00px;top:120.70px;font-size:13px;line-height:13px;letter-spacing:-0.197px;color:#e4e4e4;">Ctrl+Y</span>
<span class="t" style="left:191.00px;top:143.70px;font-size:13px;line-height:13px;letter-spacing:-0.872px;color:#e4e4e4;">Camera</span>
<span class="t" style="left:340.00px;top:143.70px;font-size:13px;line-height:13px;letter-spacing:-0.006px;color:#e4e4e4;">Ctrl+M</span>
<span class="t" style="left:191.00px;top:169.00px;font-size:13px;line-height:13px;letter-spacing:-1.148px;color:#e4e4e4;">Shapes</span>
<svg style="left:382px;top:171.0px;" width="7" height="9" viewBox="0 0 7 9"><path d="M1 0.6 L5.6 4.5 L1 8.4 Z" fill="#bcbcbc"/></svg>
<span class="t" style="left:191.00px;top:192.00px;font-size:13px;line-height:13px;letter-spacing:-0.603px;color:#e4e4e4;">Behaviours</span>
<svg style="left:382px;top:194.0px;" width="7" height="9" viewBox="0 0 7 9"><path d="M1 0.6 L5.6 4.5 L1 8.4 Z" fill="#bcbcbc"/></svg>
<span class="t" style="left:191.00px;top:215.30px;font-size:13px;line-height:13px;letter-spacing:-0.443px;color:#e4e4e4;">Effects</span>
<svg style="left:382px;top:217.3px;" width="7" height="9" viewBox="0 0 7 9"><path d="M1 0.6 L5.6 4.5 L1 8.4 Z" fill="#bcbcbc"/></svg>
<span class="t" style="left:191.00px;top:238.30px;font-size:13px;line-height:13px;letter-spacing:-0.055px;color:#e4e4e4;">Utilities</span>
<svg style="left:382px;top:240.3px;" width="7" height="9" viewBox="0 0 7 9"><path d="M1 0.6 L5.6 4.5 L1 8.4 Z" fill="#bcbcbc"/></svg>
<span class="t" style="left:191.00px;top:263.00px;font-size:13px;line-height:13px;letter-spacing:-0.538px;color:#e4e4e4;">Layout</span>
<svg style="left:382px;top:265.0px;" width="7" height="9" viewBox="0 0 7 9"><path d="M1 0.6 L5.6 4.5 L1 8.4 Z" fill="#bcbcbc"/></svg>
<span class="t" style="left:191.00px;top:288.00px;font-size:13px;line-height:13px;letter-spacing:-0.510px;color:#e4e4e4;">Text Animation Presets</span>
<svg style="left:382px;top:290.0px;" width="7" height="9" viewBox="0 0 7 9"><path d="M1 0.6 L5.6 4.5 L1 8.4 Z" fill="#bcbcbc"/></svg>
<span class="t" style="left:191.00px;top:311.00px;font-size:13px;line-height:13px;letter-spacing:-1.004px;color:#e4e4e4;">Demo Scenes</span>
<svg style="left:382px;top:313.0px;" width="7" height="9" viewBox="0 0 7 9"><path d="M1 0.6 L5.6 4.5 L1 8.4 Z" fill="#bcbcbc"/></svg>
<div style="left:393px;top:164px;width:176px;height:644px;background:#282828;box-shadow:2px 2px 3px rgba(0,0,0,0.38);"></div>
<div style="left:393px;top:187px;width:176px;height:23px;background:#6a6a6a;"></div>
<span class="t" style="left:414.20px;top:169.00px;font-size:13px;line-height:13px;letter-spacing:-0.818px;color:#e4e4e4;">Basic Line</span>
<span class="t" style="left:414.20px;top:192.00px;font-size:13px;line-height:13px;letter-spacing:-1.017px;color:#e4e4e4;">Basic Shape</span>
<span class="t" style="left:414.20px;top:215.00px;font-size:13px;line-height:13px;letter-spacing:-0.660px;color:#e4e4e4;">Component (Pro)</span>
<span class="t" style="left:414.20px;top:238.00px;font-size:13px;line-height:13px;letter-spacing:-0.871px;color:#e4e4e4;">Connect Shape</span>
<span class="t" style="left:414.20px;top:261.00px;font-size:13px;line-height:13px;letter-spacing:-0.617px;color:#e4e4e4;">Convex Hull</span>
<span class="t" style="left:414.20px;top:284.00px;font-size:13px;line-height:13px;letter-spacing:-0.533px;color:#e4e4e4;">Corner Pin</span>
<span class="t" style="left:414.20px;top:307.00px;font-size:13px;line-height:13px;letter-spacing:-0.891px;color:#e4e4e4;">Custom Shape</span>
<span class="t" style="left:414.20px;top:330.00px;font-size:13px;line-height:13px;letter-spacing:-0.272px;color:#e4e4e4;">Duplicator</span>
<span class="t" style="left:414.20px;top:353.00px;font-size:13px;line-height:13px;letter-spacing:-0.680px;color:#e4e4e4;">Extract Sub-Meshes</span>
<span class="t" style="left:414.20px;top:376.00px;font-size:13px;line-height:13px;letter-spacing:-0.577px;color:#e4e4e4;">Extrude (Pro)</span>
<span class="t" style="left:414.20px;top:399.00px;font-size:13px;line-height:13px;letter-spacing:-0.931px;color:#e4e4e4;">Footage Shape</span>
<span class="t" style="left:414.20px;top:422.00px;font-size:13px;line-height:13px;letter-spacing:-0.766px;color:#e4e4e4;">Forge Dynamics (Pro)</span>
<span class="t" style="left:414.20px;top:445.00px;font-size:13px;line-height:13px;letter-spacing:-0.615px;color:#e4e4e4;">Grid Layout Group (Pro)</span>
<span class="t" style="left:414.20px;top:468.00px;font-size:13px;line-height:13px;letter-spacing:-0.667px;color:#e4e4e4;">Grid Layout Row (Pro)</span>
<span class="t" style="left:414.20px;top:491.00px;font-size:13px;line-height:13px;letter-spacing:-1.009px;color:#e4e4e4;">Image To Shapes</span>
<span class="t" style="left:414.20px;top:514.00px;font-size:13px;line-height:13px;letter-spacing:-0.627px;color:#e4e4e4;">Isolines (Pro)</span>
<span class="t" style="left:414.20px;top:537.00px;font-size:13px;line-height:13px;letter-spacing:-0.799px;color:#e4e4e4;">JavaScript Shape (Pro)</span>
<span class="t" style="left:414.20px;top:560.00px;font-size:13px;line-height:13px;letter-spacing:-0.665px;color:#e4e4e4;">Layout Group (Pro)</span>
<span class="t" style="left:414.20px;top:583.00px;font-size:13px;line-height:13px;letter-spacing:-0.509px;color:#e4e4e4;">Merge</span>
<span class="t" style="left:414.20px;top:606.00px;font-size:13px;line-height:13px;letter-spacing:-0.887px;color:#e4e4e4;">Mesh Shape (Pro)</span>
<span class="t" style="left:414.20px;top:629.00px;font-size:13px;line-height:13px;letter-spacing:-0.198px;color:#e4e4e4;">Outline</span>
<span class="t" style="left:414.20px;top:652.00px;font-size:13px;line-height:13px;letter-spacing:-0.545px;color:#e4e4e4;">Points to Path</span>
<span class="t" style="left:414.20px;top:675.00px;font-size:13px;line-height:13px;letter-spacing:-0.617px;color:#e4e4e4;">Pre-Comp</span>
<span class="t" style="left:414.20px;top:698.00px;font-size:13px;line-height:13px;letter-spacing:-0.888px;color:#e4e4e4;">Quad Tree Shape</span>
<span class="t" style="left:414.20px;top:721.00px;font-size:13px;line-height:13px;letter-spacing:-1.200px;color:#e4e4e4;">Ray</span>
<span class="t" style="left:414.20px;top:744.00px;font-size:13px;line-height:13px;letter-spacing:-0.810px;color:#e4e4e4;">Segment Path (Pro)</span>
<span class="t" style="left:414.20px;top:767.00px;font-size:13px;line-height:13px;letter-spacing:-0.630px;color:#e4e4e4;">Shortest Path (Pro)</span>
<span class="t" style="left:414.20px;top:790.00px;font-size:13px;line-height:13px;letter-spacing:-0.824px;color:#e4e4e4;">Spacer (Pro)</span>
<div style="left:402px;top:184px;width:165.4px;height:30px;border:3.4px solid #a6e81c;"></div>
<div style="left:163px;top:159px;width:234px;height:33px;border:3px solid #a6e81c;"></div>
</div></body></html>
